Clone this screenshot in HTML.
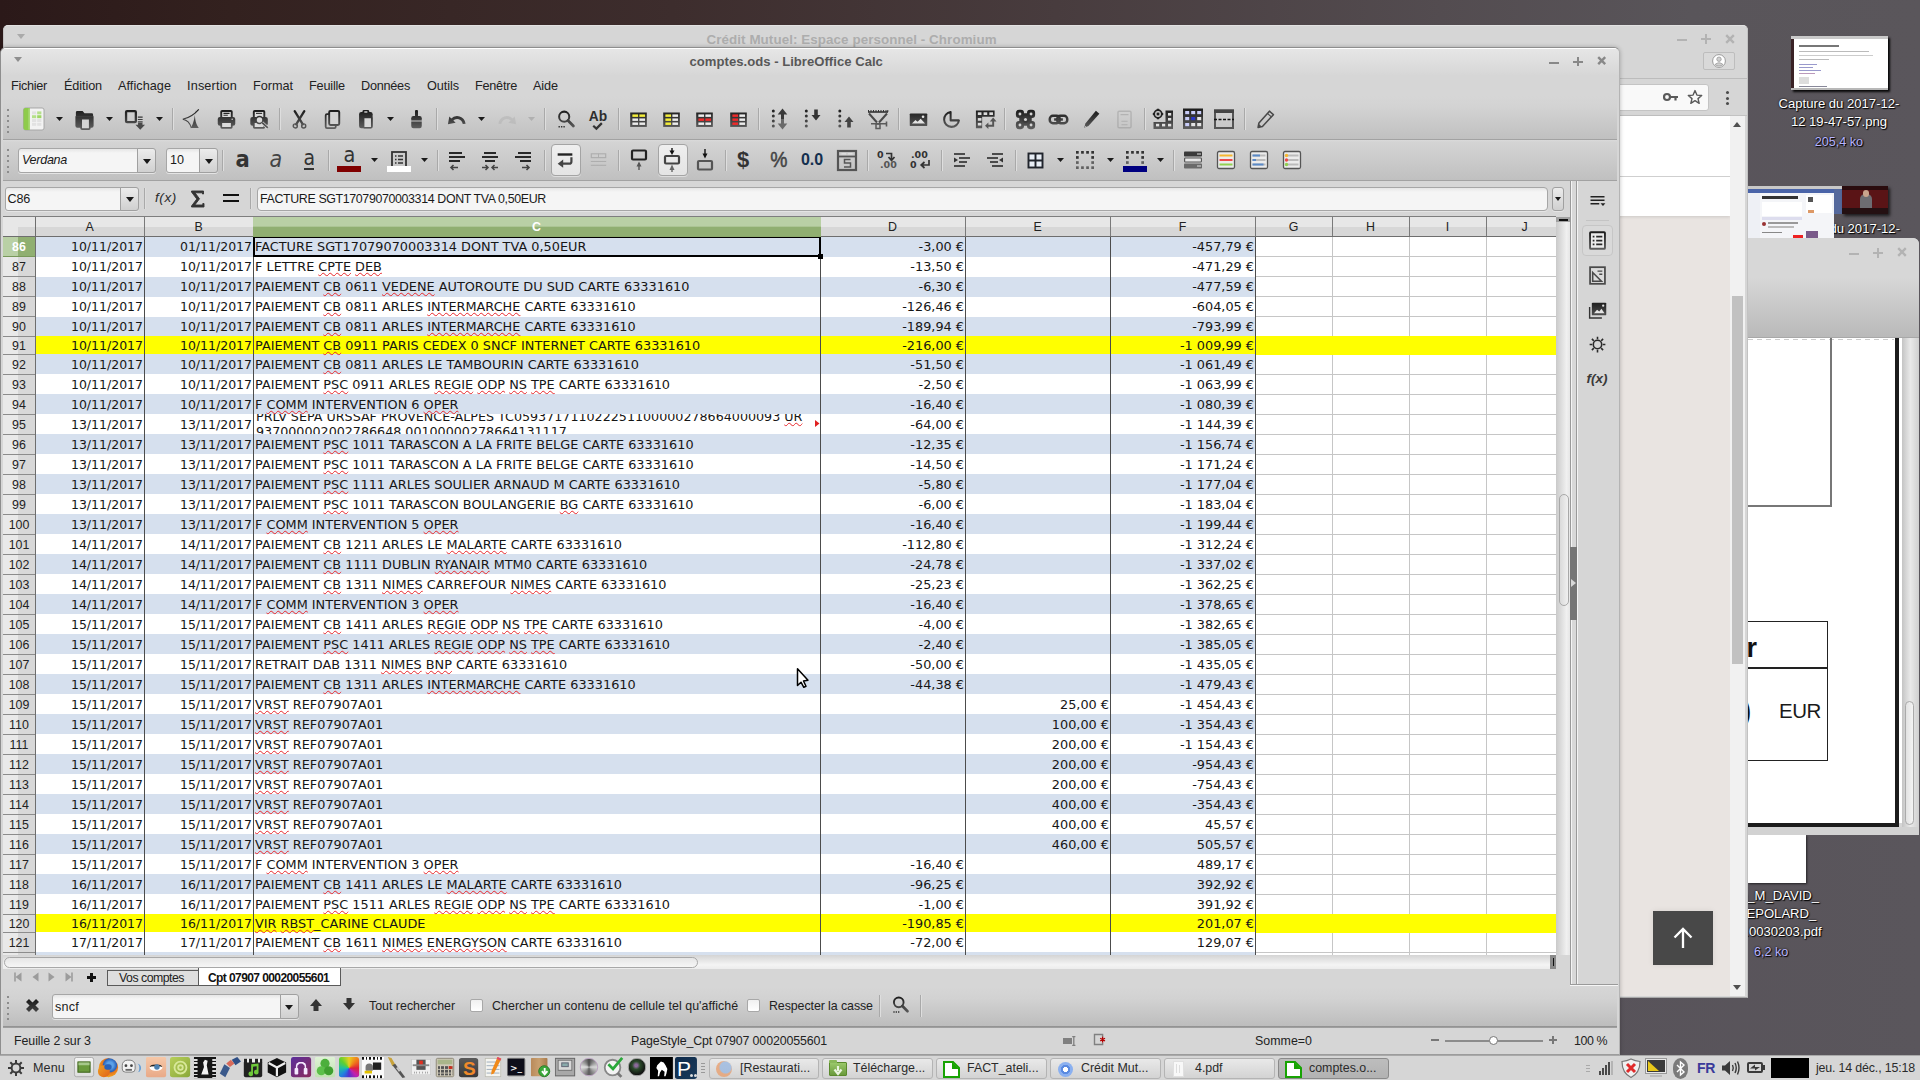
<!DOCTYPE html>
<html lang="fr"><head><meta charset="utf-8"><title>comptes.ods - LibreOffice Calc</title>
<style>
html,body{margin:0;padding:0;width:1920px;height:1080px;overflow:hidden;background:#5a565b}
body{position:relative;font-family:"Liberation Sans","DejaVu Sans",sans-serif;font-size:12px;color:#2b2b2b}
div,svg,span.t{position:absolute;box-sizing:border-box}
span.t,span.c{white-space:pre}
span.c{position:absolute;font:12.85px/16px "DejaVu Sans","Liberation Sans",sans-serif;color:#161616}
span.c.d{font-size:12.5px}
span.c u{text-decoration:underline wavy #e8262a;text-decoration-thickness:1px;text-underline-offset:.5px;text-decoration-skip-ink:none}
svg{overflow:visible}
.win{background:#d6d6d6;border-radius:5px 5px 0 0}
</style></head><body>
<div style="left:0px;top:0px;width:1920px;height:1080px;background:linear-gradient(90deg,#2b1919 0%,#33211f 12%,#3d2d2d 35%,#483c3e 55%,#534c50 75%,#59555a 88%,#5a565b 100%)"></div><div style="left:1560px;top:60px;width:360px;height:1020px;background:linear-gradient(90deg,#58535a,#5a565c)"></div><div style="left:1791px;top:36px;width:97px;height:54px;background:#fff;box-shadow:2px 2px 2px rgba(0,0,0,.9)"><div style="left:0px;top:0px;width:3px;height:54px;background:#3a2226"></div><div style="left:0px;top:52px;width:97px;height:2px;background:#b8b8b8"></div><div style="left:0px;top:0px;width:97px;height:3px;background:#c9c9c9"></div><div style="left:8px;top:9px;width:40px;height:2px;background:#777"></div><div style="left:8px;top:15px;width:70px;height:1px;background:#bbb"></div><div style="left:8px;top:19px;width:74px;height:1px;background:#ccc"></div><div style="left:8px;top:23px;width:30px;height:1px;background:#bbb"></div><div style="left:8px;top:28px;width:18px;height:1px;background:#99c"></div><div style="left:8px;top:31px;width:14px;height:1px;background:#99c"></div><div style="left:8px;top:34px;width:22px;height:1px;background:#99c"></div><div style="left:8px;top:37px;width:16px;height:1px;background:#b9b"></div><div style="left:8px;top:41px;width:10px;height:7px;background:#ddd"></div><div style="left:8px;top:50px;width:28px;height:1px;background:#889"></div></div><span class="t" style='left:1778.6px;top:95.0px;font:13.1px/18px "Liberation Sans", "DejaVu Sans", sans-serif;color:#fff;text-shadow:1px 1px 1px #000,0 0 2px #000;'>Capture du 2017-12-</span><span class="t" style='left:1790.9px;top:113.0px;font:13.1px/18px "Liberation Sans", "DejaVu Sans", sans-serif;color:#fff;text-shadow:1px 1px 1px #000,0 0 2px #000;'>12 19-47-57.png</span><span class="t" style='left:1814.8px;top:133.0px;font:12.6px/18px "Liberation Sans", "DejaVu Sans", sans-serif;color:#b9b4ff;text-shadow:1px 1px 1px #000,0 0 2px #000;'>205,4 ko</span><span class="t" style='left:1829.4px;top:219.5px;font:13.1px/18px "Liberation Sans", "DejaVu Sans", sans-serif;color:#fff;text-shadow:1px 1px 1px #000,0 0 2px #000;'>du 2017-12-</span><div style="left:1833px;top:186px;width:10px;height:28px;background:linear-gradient(#c8c8c8 0,#c8c8c8 3px,#55699c 3px)"></div><div style="left:1842px;top:186px;width:46px;height:28px;background:#5a1416;box-shadow:2px 2px 3px rgba(0,0,0,.7)"><div style="left:0px;top:0px;width:46px;height:4px;background:#2a0c0e"></div><div style="left:18px;top:8px;width:12px;height:18px;background:#6d6d72;border-radius:5px 5px 0 0"></div><div style="left:21px;top:4px;width:6px;height:7px;background:#c9a48c;border-radius:3px"></div><div style="left:0px;top:22px;width:46px;height:6px;background:#241012"></div></div><div style="left:1748px;top:186px;width:86px;height:52px;background:#f4f5f8"><div style="left:0px;top:0px;width:86px;height:3px;background:#c8c8c8"></div><div style="left:0px;top:3px;width:86px;height:4px;background:#4a64a8"></div><div style="left:0px;top:7px;width:12px;height:45px;background:#eef0f5"></div><div style="left:14px;top:10px;width:36px;height:3px;background:#333"></div><div style="left:14px;top:16px;width:40px;height:14px;background:#fff"></div><div style="left:14px;top:31px;width:40px;height:3px;background:#dde"></div><div style="left:14px;top:36px;width:4px;height:4px;background:#933;border-radius:2px"></div><div style="left:20px;top:36px;width:30px;height:2px;background:#999"></div><div style="left:20px;top:40px;width:26px;height:2px;background:#bbb"></div><div style="left:58px;top:9px;width:26px;height:18px;background:#fff"></div><div style="left:60px;top:11px;width:5px;height:5px;background:#555"></div><div style="left:60px;top:24px;width:6px;height:3px;background:#d96"></div><div style="left:45px;top:49px;width:10px;height:3px;background:#e22"></div><div style="left:58px;top:45px;width:12px;height:7px;background:#7a5a8a"></div><div style="left:14px;top:46px;width:20px;height:1px;background:#888"></div></div><div style="left:1748px;top:835px;width:58px;height:48px;background:#fff;box-shadow:1px 1px 2px rgba(0,0,0,.6)"></div><span class="t" style='left:1740.0px;top:887.0px;font:13.1px/18px "Liberation Sans", "DejaVu Sans", sans-serif;color:#fff;text-shadow:1px 1px 1px #000,0 0 2px #000;'>n_M_DAVID_</span><span class="t" style='left:1737.0px;top:905.0px;font:13.1px/18px "Liberation Sans", "DejaVu Sans", sans-serif;color:#fff;text-shadow:1px 1px 1px #000,0 0 2px #000;'>DEPOLARD_</span><span class="t" style='left:1738.0px;top:923.0px;font:13.1px/18px "Liberation Sans", "DejaVu Sans", sans-serif;color:#fff;text-shadow:1px 1px 1px #000,0 0 2px #000;'>0.0030203.pdf</span><span class="t" style='left:1754.0px;top:943.0px;font:12.6px/18px "Liberation Sans", "DejaVu Sans", sans-serif;color:#b9b4ff;text-shadow:1px 1px 1px #000,0 0 2px #000;'>6,2 ko</span>
<div class="win" style="left:3px;top:25px;width:1745px;height:972.5px;overflow:hidden"><span class="t" style='left:703.5px;top:6.5px;font:normal bold 13.4px/16px "Liberation Sans", "DejaVu Sans", sans-serif;color:#adadad;letter-spacing:0.07px;'>Crédit Mutuel: Espace personnel - Chromium</span><svg style="left:14px;top:9px;" width="8" height="5" viewBox="0 0 8 5"><path d="M0 0H8L4 5Z" fill="#aaa"/></svg><div style="left:1674px;top:14px;width:10px;height:2px;background:#b3b3b3"></div><div style="left:1698px;top:13px;width:10px;height:2px;background:#b3b3b3"></div><div style="left:1702px;top:9px;width:2px;height:10px;background:#b3b3b3"></div><svg style="left:1722px;top:8.5px;" width="10" height="10" viewBox="0 0 10 10"><path d="M1.200 1.200 L8.8 8.8 M8.8 1.200 L1.200 8.8" stroke="#b3b3b3" stroke-width="2.400" fill="none"/></svg><div style="left:1700px;top:27px;width:32px;height:18px;border:1px solid #bdbdbd;border-radius:2px;background:#d9d9d9"><svg style="left:8px;top:1px;" width="14" height="14" viewBox="0 0 14 14"><circle cx="7" cy="7" r="6.4" fill="#fff" stroke="#9a9a9a" stroke-width="1"/><circle cx="7" cy="5.2" r="2.2" fill="#d0d0d0" stroke="#9a9a9a" stroke-width=".8"/><path d="M3 10.5Q7 7 11 10.5Q7 13.6 3 10.5Z" fill="#d0d0d0" stroke="#9a9a9a" stroke-width=".8"/></svg></div><div style="left:1600px;top:53px;width:144px;height:1px;background:#bcbcbc"></div><div style="left:1560px;top:58.5px;width:146px;height:27.5px;background:#f9f9f9;border:1px solid #c4c4c4;border-radius:3px"></div><svg style="left:1660px;top:67px;" width="16" height="10" viewBox="0 0 16 10"><circle cx="4" cy="5" r="3" fill="none" stroke="#5a5a5a" stroke-width="2.2"/><path d="M7 5H15M12.5 5V8.5" stroke="#5a5a5a" stroke-width="2.2" fill="none"/></svg><svg style="left:1684px;top:64px;" width="16" height="16" viewBox="0 0 16 16"><path d="M8 1.6L9.9 6.1L14.7 6.5L11 9.6L12.2 14.3L8 11.7L3.8 14.3L5 9.6L1.3 6.5L6.1 6.1Z" fill="none" stroke="#5a5a5a" stroke-width="1.4" stroke-linejoin="round"/></svg><div style="left:1722.7px;top:66.3px;width:3px;height:3px;background:#4a4a4a;border-radius:2px"></div><div style="left:1722.7px;top:71.8px;width:3px;height:3px;background:#4a4a4a;border-radius:2px"></div><div style="left:1722.7px;top:77.3px;width:3px;height:3px;background:#4a4a4a;border-radius:2px"></div><div style="left:1600px;top:90px;width:144px;height:1px;background:#c2c2c2"></div><div style="left:1600px;top:91px;width:127px;height:880px;background:#e9e4e1"></div><div style="left:1600px;top:91px;width:127px;height:100px;background:#fff;box-shadow:0 1px 3px rgba(0,0,0,.12)"></div><div style="left:1600px;top:151px;width:127px;height:1px;background:#cfcfcf"></div><div style="left:1727px;top:91px;width:15px;height:880px;background:#f1f1f1"></div><div style="left:1729px;top:271px;width:11px;height:368px;background:#c1c1c1"></div><svg style="left:1730px;top:97px;" width="8" height="5" viewBox="0 0 8 5"><path d="M0 5H8L4 0Z" fill="#505050"/></svg><svg style="left:1730px;top:960px;" width="8" height="5" viewBox="0 0 8 5"><path d="M0 0H8L4 5Z" fill="#505050"/></svg><div style="left:1650px;top:886px;width:60px;height:54px;background:#484848;box-shadow:0 0 6px rgba(0,0,0,.08)"><svg style="left:20px;top:16px;" width="20" height="22" viewBox="0 0 20 22"><path d="M10 21V2M1.5 10.5L10 2L18.5 10.5" stroke="#fff" stroke-width="2.3" fill="none"/></svg></div><div style="left:0px;top:0px;width:1745px;height:972.5px;border:1px solid #c2c2c2;border-top-color:#e2e2e2;border-bottom-color:#a8a8a8;border-radius:5px 5px 0 0"></div></div>
<div style="left:1748px;top:238px;width:171px;height:597px;overflow:hidden;border-radius:0 6px 0 0;background:#d6d6d6"><div style="left:0px;top:0px;width:171px;height:100px;background:linear-gradient(#d7d7d7 0%,#d7d7d7 40%,#b9b9b9 100%)"></div><div style="left:101px;top:14.5px;width:10px;height:2px;background:#b3b3b3"></div><div style="left:125px;top:13.5px;width:10px;height:2px;background:#b3b3b3"></div><div style="left:129px;top:9.5px;width:2px;height:10px;background:#b3b3b3"></div><svg style="left:149px;top:9px;" width="10" height="10" viewBox="0 0 10 10"><path d="M1.200 1.200 L8.8 8.8 M8.8 1.200 L1.200 8.8" stroke="#b3b3b3" stroke-width="2.400" fill="none"/></svg><div style="left:0px;top:99px;width:171px;height:1px;background:#a8a8a8"></div><div style="left:0px;top:100px;width:148px;height:488px;background:#fff"></div><div style="left:0px;top:101px;width:146px;height:1px;background:repeating-linear-gradient(90deg,#ccc 0 5px,#fff 5px 9px)"></div><div style="left:82px;top:100px;width:2px;height:169px;background:#777"></div><div style="left:0px;top:267px;width:84px;height:2px;background:#777"></div><div style="left:0px;top:383px;width:80px;height:140px;border:1px solid #222;border-left:none"></div><div style="left:0px;top:429px;width:80px;height:2px;background:#222"></div><span class="t" style='left:-18.0px;top:395.0px;font:normal bold 27px/30px "Liberation Sans", "DejaVu Sans", sans-serif;color:#111;'>ur</span><span class="t" style='left:-6.5px;top:458.0px;font:normal bold 29px/30px "Liberation Sans", "DejaVu Sans", sans-serif;color:#111;'>)</span><span class="t" style='left:31.0px;top:461.0px;font:20.5px/24px "Liberation Sans", "DejaVu Sans", sans-serif;color:#1a1a1a;letter-spacing:-0.43px;'>EUR</span><div style="left:147px;top:100px;width:4px;height:490px;background:#1c1c1c"></div><div style="left:0px;top:585px;width:151px;height:4px;background:#1c1c1c"></div><div style="left:151px;top:100px;width:3px;height:485px;background:#fff"></div><div style="left:154px;top:100px;width:17px;height:497px;background:linear-gradient(90deg,#c4c4c4,#e9e9e9 50%,#d0d0d0)"></div><div style="left:157px;top:463px;width:9px;height:124px;border:1px solid #aaa;border-radius:5px;background:linear-gradient(90deg,#e2e2e2,#f4f4f4)"></div><div style="left:0px;top:589px;width:171px;height:8px;background:#d2d2d2"></div></div>
<svg width="0" height="0" style="left:0;top:0"><defs><linearGradient id="g" gradientUnits="userSpaceOnUse" x1="0" y1="2" x2="0" y2="22"><stop offset="0" stop-color="#1c1c1c"/><stop offset="1" stop-color="#5e5e5e"/></linearGradient></defs></svg><div style="left:0px;top:47px;width:1620px;height:1008px;border:1px solid #8e8e8e;border-right-color:#b4b4b4;border-bottom-color:#9c9c9c;border-radius:6px 6px 0 0;background:#d6d6d6;box-shadow:0 0 4px rgba(0,0,0,.25)"></div><div style="left:1px;top:48px;width:1618px;height:28px;background:linear-gradient(#fff 0,#fff 1px,#e6e6e6 1px,#d6d6d6);border-radius:5px 5px 0 0"></div><span class="t" style='left:689.5px;top:53.5px;font:normal bold 13.1px/16px "Liberation Sans", "DejaVu Sans", sans-serif;color:#585858;letter-spacing:0.02px;'>comptes.ods - LibreOffice Calc</span><svg style="left:14px;top:57px;" width="8" height="5" viewBox="0 0 8 5"><path d="M0 0H8L4 5Z" fill="#8e8e8e"/></svg><div style="left:1549.3px;top:61.5px;width:9.4px;height:2px;background:#888"></div><div style="left:1573.3px;top:60.5px;width:9.4px;height:2px;background:#888"></div><div style="left:1577px;top:56.8px;width:2px;height:9.4px;background:#888"></div><svg style="left:1597.3px;top:56.3px;" width="9.4" height="9.4" viewBox="0 0 9.4 9.4"><path d="M1.200 1.200 L8.2 8.2 M8.2 1.200 L1.200 8.2" stroke="#888" stroke-width="2.400" fill="none"/></svg><span class="t" style='left:11.0px;top:77.5px;font:12.7px/16px "Liberation Sans", "DejaVu Sans", sans-serif;color:#222;letter-spacing:-0.30px;'>Fichier</span><span class="t" style='left:64.0px;top:77.5px;font:12.7px/16px "Liberation Sans", "DejaVu Sans", sans-serif;color:#222;letter-spacing:-0.11px;'>Édition</span><span class="t" style='left:118.0px;top:77.5px;font:12.7px/16px "Liberation Sans", "DejaVu Sans", sans-serif;color:#222;letter-spacing:0.04px;'>Affichage</span><span class="t" style='left:187.0px;top:77.5px;font:12.7px/16px "Liberation Sans", "DejaVu Sans", sans-serif;color:#222;letter-spacing:0.15px;'>Insertion</span><span class="t" style='left:253.0px;top:77.5px;font:12.7px/16px "Liberation Sans", "DejaVu Sans", sans-serif;color:#222;letter-spacing:-0.03px;'>Format</span><span class="t" style='left:309.0px;top:77.5px;font:12.7px/16px "Liberation Sans", "DejaVu Sans", sans-serif;color:#222;letter-spacing:-0.20px;'>Feuille</span><span class="t" style='left:361.0px;top:77.5px;font:12.7px/16px "Liberation Sans", "DejaVu Sans", sans-serif;color:#222;letter-spacing:-0.26px;'>Données</span><span class="t" style='left:427.0px;top:77.5px;font:12.7px/16px "Liberation Sans", "DejaVu Sans", sans-serif;color:#222;letter-spacing:-0.07px;'>Outils</span><span class="t" style='left:475.0px;top:77.5px;font:12.7px/16px "Liberation Sans", "DejaVu Sans", sans-serif;color:#222;letter-spacing:-0.25px;'>Fenêtre</span><span class="t" style='left:533.0px;top:77.5px;font:12.7px/16px "Liberation Sans", "DejaVu Sans", sans-serif;color:#222;letter-spacing:-0.10px;'>Aide</span><div style="left:3px;top:96px;width:1614px;height:43px;background:linear-gradient(#d6d6d6,#d3d3d3 25%,#c0c0c0)"></div><div style="left:3px;top:139px;width:1614px;height:1px;background:#a2a2a2"></div><div style="left:7px;top:109px;width:2px;height:2px;background:#8c8c8c"></div><div style="left:7px;top:114.5px;width:2px;height:2px;background:#8c8c8c"></div><div style="left:7px;top:120px;width:2px;height:2px;background:#8c8c8c"></div><div style="left:7px;top:125.5px;width:2px;height:2px;background:#8c8c8c"></div><div style="left:7px;top:131px;width:2px;height:2px;background:#8c8c8c"></div><svg style="left:22.25px;top:107.25px;" width="23.5" height="23.5" viewBox="0 0 24 24"><rect x="1.500" y="1" width="21" height="22.500" rx="2" fill="#f3f3f3" stroke="#a6a6a6"/><path d="M3.500 1H8V23.500H3.500A2 2 0 0 1 1.500 21.500V3A2 2 0 0 1 3.500 1Z" fill="#8ecb4b"/><rect x="6.500" y="1.500" width="1.500" height="21.500" fill="#a9d977"/><rect x="10.2" y="4.5" width="4.300" height="3" fill="#e2e2e2"/><rect x="15.5" y="4.5" width="4.300" height="3" fill="#b5e08a"/><rect x="10.2" y="8.4" width="4.300" height="3" fill="#b5e08a"/><rect x="15.5" y="8.4" width="4.300" height="3" fill="#9fd765"/><rect x="10.2" y="12.3" width="4.300" height="3" fill="#e2e2e2"/><rect x="15.5" y="12.3" width="4.300" height="3" fill="#e2e2e2"/><rect x="10.2" y="16.2" width="4.300" height="3" fill="#e2e2e2"/><rect x="15.5" y="16.2" width="4.300" height="3" fill="#e2e2e2"/></svg><svg style="left:72.5px;top:107.5px;" width="23" height="23" viewBox="0 0 24 24"><path d="M3 4.500A1.500 1.500 0 0 1 4.500 3H10L12 5.500H19.500A1.500 1.500 0 0 1 21 7V9H3Z" fill="url(#g)"/><path d="M2.500 8.500H21.500V18.500A2 2 0 0 1 19.500 20.500H4.500A2 2 0 0 1 2.500 18.500Z" fill="url(#g)"/><rect x="8.500" y="11" width="9" height="11" rx="1" fill="#d4d4d4" stroke="url(#g)" stroke-width="1.800"/></svg><svg style="left:122.5px;top:107.5px;" width="23" height="23" viewBox="0 0 24 24"><rect x="3.200" y="3.200" width="10.200" height="11.600" rx="1" fill="none" stroke="url(#g)" stroke-width="2.400"/><path d="M15.500 9.500H20.500M15.500 12H20.500M15.500 14.500H20.500" stroke="url(#g)" stroke-width="1.300"/><path d="M15.700 15.500H20.300V17.500H23L18 22.800L13 17.500H15.700Z" fill="#4a4a4a"/></svg><svg style="left:180px;top:108px;" width="22" height="22" viewBox="0 0 24 24"><path d="M17 1.500C15.500 9 16.500 16 20.500 21.800L11.800 21.800C15 16 16.500 9 17 1.500Z" fill="url(#g)"/><path d="M3 12.300Q13 10 20.500 1.400M3 12.300Q10 13.500 12.500 21.800" stroke="url(#g)" stroke-width="1.300" fill="none"/></svg><svg style="left:215.5px;top:108.5px;" width="21" height="21" viewBox="0 0 24 24"><rect x="6" y="2.200" width="12" height="8" rx="1" fill="#dcdcdc" stroke="url(#g)" stroke-width="2.200"/><path d="M8.500 5H15.500M8.500 7.200H13.500" stroke="url(#g)" stroke-width="1.200"/><rect x="2" y="9" width="20" height="10" rx="2.500" fill="url(#g)"/><rect x="6" y="15" width="12" height="6.500" rx=".8" fill="#dcdcdc" stroke="url(#g)" stroke-width="2"/><circle cx="18.500" cy="11.800" r=".9" fill="#ccc"/></svg><svg style="left:248.5px;top:108.5px;" width="21" height="21" viewBox="0 0 24 24"><rect x="5.500" y="2.200" width="12" height="8" rx="1" fill="#dcdcdc" stroke="url(#g)" stroke-width="2.200"/><path d="M8 5H15" stroke="url(#g)" stroke-width="1.200"/><rect x="1.500" y="9" width="20" height="10" rx="2.500" fill="url(#g)"/><rect x="5.500" y="15" width="12" height="6.500" rx=".8" fill="#dcdcdc" stroke="url(#g)" stroke-width="2"/><circle cx="12" cy="12.500" r="4" fill="#dcdcdc" stroke="url(#g)" stroke-width="1.800"/><path d="M15 15.500L21.500 21.500" stroke="#dcdcdc" stroke-width="3.400"/><path d="M15 15.500L21.500 21.500" stroke="url(#g)" stroke-width="2"/></svg><svg style="left:288.5px;top:108.5px;" width="21" height="21" viewBox="0 0 24 24"><path d="M6.500 2.500L15.800 17.500M17.500 2.500L8.200 17.500" stroke="url(#g)" stroke-width="2.600" stroke-linecap="round"/><circle cx="7.200" cy="19.300" r="2.300" fill="none" stroke="#555" stroke-width="1.700"/><circle cx="16.800" cy="19.300" r="2.300" fill="none" stroke="#555" stroke-width="1.700"/></svg><svg style="left:321.5px;top:108.5px;" width="21" height="21" viewBox="0 0 24 24"><rect x="4.200" y="5.800" width="11.500" height="16" rx="1.500" fill="none" stroke="url(#g)" stroke-width="2"/><rect x="8.200" y="2.200" width="11.500" height="16" rx="1.500" fill="#d2d2d2" stroke="url(#g)" stroke-width="2.200"/></svg><svg style="left:355.5px;top:108.5px;" width="21" height="21" viewBox="0 0 24 24"><rect x="3.500" y="3.500" width="15.500" height="18.500" rx="2.500" fill="url(#g)"/><rect x="7.500" y="1" width="7.500" height="5" rx="1.500" fill="url(#g)"/><rect x="9.500" y="2.600" width="3.500" height="1.600" fill="#d8d8d8"/><rect x="8.700" y="9.700" width="9.300" height="11.800" rx=".8" fill="#d8d8d8" stroke="url(#g)" stroke-width="1.800"/></svg><svg style="left:405.5px;top:108.5px;" width="21" height="21" viewBox="0 0 24 24"><rect x="10.300" y="1" width="3.400" height="8" rx="1.200" fill="url(#g)"/><path d="M6 13V10.500A2.500 2.500 0 0 1 8.500 8H15.500A2.500 2.500 0 0 1 18 10.500V13Z" fill="url(#g)"/><path d="M6 14.200H18V19.500A2.500 2.500 0 0 1 15.500 22H8.500A2.500 2.500 0 0 1 6 19.500Z" fill="url(#g)"/></svg><svg style="left:445.5px;top:108.5px;" width="21" height="21" viewBox="0 0 24 24"><path d="M20.800 17C19.500 9.500 11.500 7.500 6.500 12.500" stroke="url(#g)" stroke-width="3.300" fill="none"/><path d="M2.200 17.500L3.800 8.500L11 15.800Z" fill="url(#g)"/></svg><svg style="left:554.5px;top:108.5px;" width="21" height="21" viewBox="0 0 24 24"><circle cx="10.500" cy="8.800" r="5.800" fill="none" stroke="url(#g)" stroke-width="2.300"/><path d="M14.800 13.200L21 19.500" stroke="url(#g)" stroke-width="3.200" stroke-linecap="round"/><path d="M4 20.300H5.600M6.800 20.300H8.400M9.600 20.300H11.200" stroke="#333" stroke-width="1.700"/></svg><svg style="left:586.5px;top:107.5px;" width="23" height="23" viewBox="0 0 24 24"><path d="M6.500 18.500L9.800 21.500L15.500 15.800" stroke="#333" stroke-width="2.300" fill="none"/></svg><svg style="left:627.5px;top:108.5px;" width="21" height="21" viewBox="0 0 24 24"><rect x="2.500" y="4" width="19" height="16.500" fill="url(#g)"/><rect x="5" y="6.2" width="6.500" height="2.800" fill="#f4ee3a"/><rect x="13" y="6.2" width="6.500" height="2.800" fill="#f4ee3a"/><rect x="5" y="10.8" width="6.500" height="2.800" fill="#ececec"/><rect x="13" y="10.8" width="6.500" height="2.800" fill="#ececec"/><rect x="5" y="15.4" width="6.500" height="2.800" fill="#ececec"/><rect x="13" y="15.4" width="6.500" height="2.800" fill="#ececec"/></svg><svg style="left:660.5px;top:108.5px;" width="21" height="21" viewBox="0 0 24 24"><rect x="2.500" y="4" width="19" height="16.500" fill="url(#g)"/><rect x="5" y="6.2" width="6.500" height="2.800" fill="#f4ee3a"/><rect x="13" y="6.2" width="6.500" height="2.800" fill="#ececec"/><rect x="5" y="10.8" width="6.500" height="2.800" fill="#f4ee3a"/><rect x="13" y="10.8" width="6.500" height="2.800" fill="#ececec"/><rect x="5" y="15.4" width="6.500" height="2.800" fill="#f4ee3a"/><rect x="13" y="15.4" width="6.500" height="2.800" fill="#ececec"/></svg><svg style="left:693.5px;top:108.5px;" width="21" height="21" viewBox="0 0 24 24"><rect x="2.500" y="4" width="19" height="16.500" fill="url(#g)"/><rect x="5" y="6.2" width="6.500" height="2.800" fill="#ececec"/><rect x="13" y="6.2" width="6.500" height="2.800" fill="#ececec"/><rect x="5" y="10.8" width="6.500" height="2.800" fill="#ee2a2a"/><rect x="13" y="10.8" width="6.500" height="2.800" fill="#ee2a2a"/><rect x="5" y="15.4" width="6.500" height="2.800" fill="#ececec"/><rect x="13" y="15.4" width="6.500" height="2.800" fill="#ececec"/></svg><svg style="left:727.5px;top:108.5px;" width="21" height="21" viewBox="0 0 24 24"><rect x="2.500" y="4" width="19" height="16.500" fill="url(#g)"/><rect x="5" y="6.2" width="6.500" height="2.800" fill="#ee2a2a"/><rect x="13" y="6.2" width="6.500" height="2.800" fill="#ececec"/><rect x="5" y="10.8" width="6.500" height="2.800" fill="#ee2a2a"/><rect x="13" y="10.8" width="6.500" height="2.800" fill="#ececec"/><rect x="5" y="15.4" width="6.500" height="2.800" fill="#ee2a2a"/><rect x="13" y="15.4" width="6.500" height="2.800" fill="#ececec"/></svg><svg style="left:766px;top:107px;" width="24" height="24" viewBox="0 0 24 24"><circle cx="7.3" cy="4" r="1.5" fill="url(#g)"/><circle cx="7.3" cy="9" r="1.5" fill="url(#g)"/><circle cx="7.3" cy="14" r="1.5" fill="url(#g)"/><circle cx="7.3" cy="19" r="1.5" fill="url(#g)"/><path d="M16.500 1.500L21.300 7.500H18V13H15V7.500H11.700Z" fill="#3a3a3a"/><path d="M16.500 22.500L21.300 16.500H18V12H15V16.500H11.700Z" fill="#6a6a6a"/></svg><svg style="left:799px;top:107px;" width="24" height="24" viewBox="0 0 24 24"><circle cx="7.3" cy="4" r="1.5" fill="url(#g)"/><circle cx="7.3" cy="9" r="1.5" fill="url(#g)"/><circle cx="7.3" cy="14" r="1.5" fill="url(#g)"/><circle cx="7.3" cy="19" r="1.5" fill="url(#g)"/><path d="M15.200 2.500H18.800V8H21.500L17 13.500L12.500 8H15.200Z" fill="#333"/></svg><svg style="left:833px;top:107px;" width="24" height="24" viewBox="0 0 24 24"><circle cx="6.8" cy="4" r="1.5" fill="url(#g)"/><circle cx="6.8" cy="9" r="1.5" fill="url(#g)"/><circle cx="6.8" cy="14" r="1.5" fill="url(#g)"/><circle cx="6.8" cy="19" r="1.5" fill="url(#g)"/><path d="M16 9.500L20.500 15H17.800V20.500H14.200V15H11.500Z" fill="#444"/></svg><svg style="left:866px;top:107px;" width="24" height="24" viewBox="0 0 24 24"><path d="M2 5H22" stroke="#333" stroke-width="1.600"/><path d="M2.500 3V5M5 3V5M7.500 3V5M10 3V5M12.500 3V5M15 3V5M17.500 3V5M20 3V5M21.800 3V5" stroke="#333" stroke-width="1"/><path d="M3 6.500L11 15.500M21 6.500L13 15.500" stroke="#4a4a4a" stroke-width="2"/><path d="M5 16.800H20.500V14.500V19.500" stroke="#5a5a5a" stroke-width="1.600" fill="none"/><rect x="10" y="17" width="4" height="4.500" fill="none" stroke="#5a5a5a" stroke-width="1.500"/></svg><svg style="left:907.5px;top:108.5px;" width="21" height="21" viewBox="0 0 24 24"><rect x="2" y="5" width="20" height="14.500" rx="1" fill="url(#g)"/><path d="M4.500 16.500L8.500 12.500L11 14.500L14.500 11L19.500 16.500Z" fill="#e4e4e4"/><circle cx="17.200" cy="8.800" r="1.500" fill="#e4e4e4"/></svg><svg style="left:940.5px;top:108.5px;" width="21" height="21" viewBox="0 0 24 24"><path d="M11 3.500A8.500 8.500 0 1 0 20.500 13H11Z" fill="none" stroke="url(#g)" stroke-width="2.300" stroke-linejoin="round"/></svg><svg style="left:973.5px;top:107.5px;" width="23" height="23" viewBox="0 0 24 24"><path d="M2 2.500H21.500V9H8.500V21H2Z" fill="url(#g)"/><rect x="4" y="4.500" width="3.800" height="2.800" fill="#dcdcdc"/><rect x="10" y="4.500" width="3.800" height="2.800" fill="#dcdcdc"/><rect x="16" y="4.500" width="3.800" height="2.800" fill="#dcdcdc"/><rect x="4" y="10.5" width="3.800" height="2.800" fill="#dcdcdc"/><rect x="4" y="15.5" width="3.800" height="2.800" fill="#dcdcdc"/><path d="M20 10L23.500 14H21V19.500H15V22L11.500 18.500L15 15V17.500H19V14H16.500Z" fill="#555"/></svg><svg style="left:1013.5px;top:107.5px;" width="23" height="23" viewBox="0 0 24 24"><path d="M7 7H17V17H7Z" fill="#3a3a3a" stroke="url(#g)" stroke-width="3"/><rect x="1.95" y="1.95" width="8.500" height="8.500" rx="3.200" fill="url(#g)"/><circle cx="6.2" cy="6.2" r="1.500" fill="#d4d4d4"/><rect x="1.95" y="13.55" width="8.500" height="8.500" rx="3.200" fill="url(#g)"/><circle cx="6.2" cy="17.8" r="1.500" fill="#d4d4d4"/><rect x="13.55" y="1.95" width="8.500" height="8.500" rx="3.200" fill="url(#g)"/><circle cx="17.8" cy="6.2" r="1.500" fill="#d4d4d4"/><rect x="13.55" y="13.55" width="8.500" height="8.500" rx="3.200" fill="url(#g)"/><circle cx="17.8" cy="17.8" r="1.500" fill="#d4d4d4"/><circle cx="12" cy="12" r="1.600" fill="#d4d4d4"/></svg><svg style="left:1047.5px;top:108.5px;" width="21" height="21" viewBox="0 0 24 24"><rect x="2" y="7.800" width="11.500" height="8.400" rx="3.600" fill="none" stroke="url(#g)" stroke-width="2.800"/><rect x="10.500" y="7.800" width="11.500" height="8.400" rx="3.600" fill="none" stroke="url(#g)" stroke-width="2.800"/><path d="M7 12H17" stroke="url(#g)" stroke-width="2.800"/></svg><svg style="left:1080.5px;top:108.5px;" width="21" height="21" viewBox="0 0 24 24"><path d="M17 2L21 5.500L8.500 19.500L3.500 21.500L5 16.500Z" fill="url(#g)"/><path d="M4.200 19L5.500 20.500" stroke="#ccc" stroke-width="1"/></svg><svg style="left:1151px;top:107px;" width="24" height="24" viewBox="0 0 24 24"><path d="M14.500 3.500H22V22H2.500V15H14.500Z" fill="url(#g)"/><rect x="17" y="6" width="3.200" height="2.600" fill="#e0e0e0"/><rect x="17" y="11" width="3.200" height="2.600" fill="#e0e0e0"/><rect x="17" y="16.8" width="3.200" height="2.600" fill="#e0e0e0"/><rect x="5" y="16.800" width="3.200" height="2.600" fill="#e0e0e0"/><rect x="11" y="16.800" width="3.200" height="2.600" fill="#e0e0e0"/><circle cx="7" cy="7" r="3.800" fill="#d4d4d4" stroke="#222" stroke-width="1.800"/><rect x="5.600" y="5.600" width="2.800" height="2.800" fill="#222"/><path d="M7 1.800V3M7 11V12.200M1.800 7H3M11 7H12.200" stroke="#222" stroke-width="2.200"/></svg><svg style="left:1181px;top:107px;" width="24" height="24" viewBox="0 0 24 24"><rect x="2" y="1.500" width="20" height="20.500" fill="url(#g)"/><rect x="4.2" y="4" width="4" height="3.200" fill="#c8ccf8"/><rect x="10.2" y="4" width="4" height="3.200" fill="#c8ccf8"/><rect x="16.2" y="4" width="4" height="3.200" fill="#c8ccf8"/><rect x="4.2" y="10" width="4" height="3.200" fill="#c8ccf8"/><rect x="10.2" y="10" width="4" height="3.200" fill="#2a36c8"/><rect x="16.2" y="10" width="4" height="3.200" fill="#e4e4e4"/><rect x="4.2" y="16" width="4" height="3.200" fill="#c8ccf8"/><rect x="10.2" y="16" width="4" height="3.200" fill="#e4e4e4"/><rect x="16.2" y="16" width="4" height="3.200" fill="#e4e4e4"/></svg><svg style="left:1212px;top:107px;" width="24" height="24" viewBox="0 0 24 24"><rect x="3" y="3.500" width="18" height="17.500" fill="none" stroke="#555" stroke-width="2"/><rect x="2" y="2.500" width="20" height="3.500" fill="#444"/><path d="M2 12.500H22" stroke="#111" stroke-width="1.700" stroke-dasharray="3 1.500"/></svg><svg style="left:1254.5px;top:108.5px;" width="21" height="21" viewBox="0 0 24 24"><path d="M16.500 2.500L21 6.500L8.500 20L3.500 21L4.500 16Z" fill="none" stroke="#4a4a4a" stroke-width="1.800" stroke-linejoin="round"/><path d="M3.500 21L4.300 17L7.800 20Z" fill="#4a4a4a"/><path d="M14.200 5L18.700 9" stroke="#4a4a4a" stroke-width="1.400"/></svg><svg style="left:496.5px;top:108.5px;opacity:0.09;" width="21" height="21" viewBox="0 0 24 24"><path d="M3.200 17C4.500 9.500 12.500 7.500 17.500 12.500" stroke="url(#g)" stroke-width="3.300" fill="none"/><path d="M21.800 17.500L20.200 8.500L13 15.800Z" fill="url(#g)"/></svg><span class="t" style='left:588.8px;top:109.0px;font:normal bold 13.8px/16px "Liberation Sans", "DejaVu Sans", sans-serif;color:#2e2e2e;'>Ab</span><svg style="left:1113.5px;top:108.5px;opacity:0.22;" width="21" height="21" viewBox="0 0 24 24"><rect x="4.500" y="2.500" width="15" height="19" rx="1.500" fill="none" stroke="#555" stroke-width="1.600"/><path d="M7.500 6.500H16.500M8.500 14H15.500M8.500 18H15.500" stroke="#555" stroke-width="1.300"/></svg><svg style="left:55.5px;top:116.5px;" width="7" height="4" viewBox="0 0 7 4"><path d="M0 0H7L3.500 4Z" fill="#1a1a1a"/></svg><svg style="left:105.5px;top:116.5px;" width="7" height="4" viewBox="0 0 7 4"><path d="M0 0H7L3.500 4Z" fill="#1a1a1a"/></svg><svg style="left:155.5px;top:116.5px;" width="7" height="4" viewBox="0 0 7 4"><path d="M0 0H7L3.500 4Z" fill="#1a1a1a"/></svg><svg style="left:386.5px;top:116.5px;" width="7" height="4" viewBox="0 0 7 4"><path d="M0 0H7L3.500 4Z" fill="#1a1a1a"/></svg><svg style="left:477.5px;top:116.5px;" width="7" height="4" viewBox="0 0 7 4"><path d="M0 0H7L3.500 4Z" fill="#1a1a1a"/></svg><svg style="left:527.5px;top:116.5px;" width="7" height="4" viewBox="0 0 7 4"><path d="M0 0H7L3.500 4Z" fill="#b0b0b0"/></svg><div style="left:172px;top:108px;width:1px;height:22px;background:#a9a9a9"></div><div style="left:173px;top:108px;width:1px;height:22px;background:#dedede"></div><div style="left:279px;top:108px;width:1px;height:22px;background:#a9a9a9"></div><div style="left:280px;top:108px;width:1px;height:22px;background:#dedede"></div><div style="left:436px;top:108px;width:1px;height:22px;background:#a9a9a9"></div><div style="left:437px;top:108px;width:1px;height:22px;background:#dedede"></div><div style="left:544px;top:108px;width:1px;height:22px;background:#a9a9a9"></div><div style="left:545px;top:108px;width:1px;height:22px;background:#dedede"></div><div style="left:618px;top:108px;width:1px;height:22px;background:#a9a9a9"></div><div style="left:619px;top:108px;width:1px;height:22px;background:#dedede"></div><div style="left:758px;top:108px;width:1px;height:22px;background:#a9a9a9"></div><div style="left:759px;top:108px;width:1px;height:22px;background:#dedede"></div><div style="left:898px;top:108px;width:1px;height:22px;background:#a9a9a9"></div><div style="left:899px;top:108px;width:1px;height:22px;background:#dedede"></div><div style="left:1004px;top:108px;width:1px;height:22px;background:#a9a9a9"></div><div style="left:1005px;top:108px;width:1px;height:22px;background:#dedede"></div><div style="left:1144px;top:108px;width:1px;height:22px;background:#a9a9a9"></div><div style="left:1145px;top:108px;width:1px;height:22px;background:#dedede"></div><div style="left:1244px;top:108px;width:1px;height:22px;background:#a9a9a9"></div><div style="left:1245px;top:108px;width:1px;height:22px;background:#dedede"></div><div style="left:3px;top:140px;width:1614px;height:40px;background:linear-gradient(#dadada,#d4d4d4 2px,#c0c0c0)"></div><div style="left:3px;top:180px;width:1614px;height:1px;background:#a2a2a2"></div><div style="left:7px;top:149px;width:2px;height:2px;background:#8c8c8c"></div><div style="left:7px;top:154.5px;width:2px;height:2px;background:#8c8c8c"></div><div style="left:7px;top:160px;width:2px;height:2px;background:#8c8c8c"></div><div style="left:7px;top:165.5px;width:2px;height:2px;background:#8c8c8c"></div><div style="left:7px;top:171px;width:2px;height:2px;background:#8c8c8c"></div><div style="left:18px;top:148px;width:120px;height:25px;background:linear-gradient(#e6e6e6,#f5f5f5 4px,#f5f5f5);border:1px solid #a6a6a6;border-radius:3px 0 0 3px;box-shadow:0 1px 0 #e4e4e4"></div><div style="left:137px;top:148px;width:19px;height:25px;background:linear-gradient(#ececec,#d0d0d0);border:1px solid #a0a0a0;border-radius:0 3px 3px 0;box-shadow:0 1px 0 #e4e4e4"></div><svg style="left:142.5px;top:159px;" width="8" height="5" viewBox="0 0 8 5"><path d="M0 0H8L4 5Z" fill="#1a1a1a"/></svg><span class="t" style='left:22.0px;top:152.0px;font:italic normal 12.6px/16px "Liberation Sans", "DejaVu Sans", sans-serif;color:#1a1a1a;letter-spacing:-0.31px;'>Verdana</span><div style="left:166px;top:148px;width:34px;height:25px;background:linear-gradient(#e6e6e6,#f5f5f5 4px,#f5f5f5);border:1px solid #a6a6a6;border-radius:3px 0 0 3px;box-shadow:0 1px 0 #e4e4e4"></div><div style="left:199px;top:148px;width:19px;height:25px;background:linear-gradient(#ececec,#d0d0d0);border:1px solid #a0a0a0;border-radius:0 3px 3px 0;box-shadow:0 1px 0 #e4e4e4"></div><svg style="left:204.5px;top:159px;" width="8" height="5" viewBox="0 0 8 5"><path d="M0 0H8L4 5Z" fill="#1a1a1a"/></svg><span class="t" style='left:170.0px;top:152.0px;font:12.6px/16px "Liberation Sans", "DejaVu Sans", sans-serif;color:#1a1a1a;'>10</span><div style="left:222px;top:150px;width:1px;height:21px;background:#a9a9a9"></div><div style="left:223px;top:150px;width:1px;height:21px;background:#dedede"></div><span class="t" style='left:235.2px;top:146.0px;font:normal bold 23px/26px "DejaVu Sans", "Liberation Sans", sans-serif;color:#333;transform:scaleX(.92);'>a</span><span class="t" style='left:269.1px;top:146.0px;font:italic normal 22.5px/26px "DejaVu Sans", "Liberation Sans", sans-serif;color:#444;transform:scaleX(.92);'>a</span><span class="t" style='left:303.2px;top:144.5px;font:20.5px/26px "DejaVu Sans", "Liberation Sans", sans-serif;color:#333;transform:scaleX(.92);'>a</span><div style="left:304px;top:168px;width:10px;height:1.5px;background:#333"></div><div style="left:328px;top:150px;width:1px;height:21px;background:#a9a9a9"></div><div style="left:329px;top:150px;width:1px;height:21px;background:#dedede"></div><span class="t" style='left:343.1px;top:141.5px;font:21px/26px "DejaVu Sans", "Liberation Sans", sans-serif;color:#333;transform:scaleX(.92);'>a</span><div style="left:337px;top:166px;width:24px;height:6px;background:#800000"></div><svg style="left:370.5px;top:157.5px;" width="7" height="4" viewBox="0 0 7 4"><path d="M0 0H7L3.500 4Z" fill="#1a1a1a"/></svg><svg style="left:391px;top:151px;" width="16" height="16" viewBox="0 0 16 16"><rect x="1" y="1" width="14" height="16" fill="none" stroke="#333" stroke-width="1.800"/><path d="M4 5H5.500M7 5H12M4 8.500H5.500M7 8.500H12M4 12H5.500M7 12H12" stroke="#333" stroke-width="1.600"/></svg><div style="left:387px;top:166px;width:24px;height:6px;background:#fff"></div><svg style="left:420.5px;top:157.5px;" width="7" height="4" viewBox="0 0 7 4"><path d="M0 0H7L3.500 4Z" fill="#1a1a1a"/></svg><div style="left:437px;top:150px;width:1px;height:21px;background:#a9a9a9"></div><div style="left:438px;top:150px;width:1px;height:21px;background:#dedede"></div><svg style="left:445px;top:148px;" width="24" height="24" viewBox="0 0 24 24"><path d="M4 5H17" stroke="#161616" stroke-width="1.800"/><path d="M4 9H20" stroke="#161616" stroke-width="1.800"/><path d="M4 13H15" stroke="#161616" stroke-width="1.800"/><path d="M6 19.500H13M8.500 17L6 19.500L8.500 22" stroke="#444" stroke-width="1.600" fill="none"/></svg><svg style="left:478px;top:148px;" width="24" height="24" viewBox="0 0 24 24"><path d="M6 5H18" stroke="#161616" stroke-width="1.800"/><path d="M4 9H20" stroke="#161616" stroke-width="1.800"/><path d="M7 13H17" stroke="#161616" stroke-width="1.800"/><path d="M4 19.500H10M7.500 17L10 19.500L7.500 22M20 19.500H14M16.500 17L14 19.500L16.500 22" stroke="#444" stroke-width="1.500" fill="none"/></svg><svg style="left:511px;top:148px;" width="24" height="24" viewBox="0 0 24 24"><path d="M7 5H20" stroke="#161616" stroke-width="1.800"/><path d="M4 9H20" stroke="#161616" stroke-width="1.800"/><path d="M9 13H20" stroke="#161616" stroke-width="1.800"/><path d="M11 19.500H18M15.500 17L18 19.500L15.500 22" stroke="#444" stroke-width="1.600" fill="none"/></svg><div style="left:544px;top:150px;width:1px;height:21px;background:#a9a9a9"></div><div style="left:545px;top:150px;width:1px;height:21px;background:#dedede"></div><div style="left:550.5px;top:144px;width:30px;height:32px;background:linear-gradient(#efefef,#e4e4e4);border:1px solid #a4a4a4;border-radius:4px;box-shadow:0 1px 0 #ddd"></div><svg style="left:554px;top:148.5px;" width="22" height="22" viewBox="0 0 24 24"><path d="M4 6H20" stroke="#222" stroke-width="2.600"/><path d="M19 9V13.500Q19 16 16.500 16H9" stroke="#444" stroke-width="2.400" fill="none"/><path d="M4 16L10 11.500V20.500Z" fill="#444"/></svg><svg style="left:586.5px;top:148.5px;opacity:0.3;" width="23" height="23" viewBox="0 0 24 24"><rect x="4.500" y="5" width="15" height="4" fill="none" stroke="#666" stroke-width="1.200"/><path d="M12 5V9M4 13H20M4 17H20" stroke="#666" stroke-width="1"/></svg><div style="left:618px;top:150px;width:1px;height:21px;background:#a9a9a9"></div><div style="left:619px;top:150px;width:1px;height:21px;background:#dedede"></div><svg style="left:626.5px;top:147.5px;" width="24" height="24" viewBox="0 0 24 24"><rect x="5" y="2.500" width="14" height="9" rx="1" fill="none" stroke="#222" stroke-width="2.200"/><path d="M12 22V15" stroke="#555" stroke-width="1.400"/><path d="M12 13.500L14.500 18.500H9.500Z" fill="#555"/></svg><div style="left:657.5px;top:144px;width:30px;height:32px;background:linear-gradient(#efefef,#e4e4e4);border:1px solid #a4a4a4;border-radius:4px;box-shadow:0 1px 0 #ddd"></div><svg style="left:660px;top:147.5px;" width="24" height="24" viewBox="0 0 24 24"><rect x="5" y="8" width="14" height="7.500" rx="1" fill="none" stroke="#444" stroke-width="2.200"/><path d="M12 0V4" stroke="#111" stroke-width="1.400"/><path d="M12 7L14.500 2.500H9.500Z" fill="#111"/><path d="M12 24V20" stroke="#666" stroke-width="1.400"/><path d="M12 16.500L14.500 22H9.500Z" fill="#666"/></svg><svg style="left:693px;top:147.5px;" width="24" height="24" viewBox="0 0 24 24"><rect x="5" y="13" width="14" height="8.500" rx="1" fill="none" stroke="#555" stroke-width="2.200"/><path d="M12 1V7" stroke="#111" stroke-width="1.400"/><path d="M12 10.500L14.500 5.500H9.500Z" fill="#111"/></svg><div style="left:725px;top:150px;width:1px;height:21px;background:#a9a9a9"></div><div style="left:726px;top:150px;width:1px;height:21px;background:#dedede"></div><span class="t" style='left:736.9px;top:147.0px;font:normal bold 22px/26px "Liberation Sans", "DejaVu Sans", sans-serif;color:#333;'>$</span><span class="t" style='left:768.7px;top:147.0px;font:22px/26px "Liberation Sans", "DejaVu Sans", sans-serif;color:#444;transform:scaleX(.88);-webkit-text-stroke:.5px #444;'>%</span><span class="t" style='left:800.9px;top:149.0px;font:normal bold 16px/22px "Liberation Sans", "DejaVu Sans", sans-serif;color:#14304f;'>0.0</span><svg style="left:835px;top:147.5px;" width="24" height="24" viewBox="0 0 24 24"><rect x="3" y="3" width="18" height="19" fill="none" stroke="#555" stroke-width="2.200"/><path d="M3 8.500H21" stroke="#555" stroke-width="1.800"/><path d="M6.500 5.800H11M13 5.800H17.500" stroke="#ddd" stroke-width="1.600"/><path d="M15.500 11.500H9.500V15H15.500V19H9" stroke="#555" stroke-width="1.500" fill="none"/></svg><div style="left:867px;top:150px;width:1px;height:21px;background:#a9a9a9"></div><div style="left:868px;top:150px;width:1px;height:21px;background:#dedede"></div><span class="t" style='left:877.0px;top:149.0px;font:normal bold 9.5px/11px "DejaVu Sans", "Liberation Sans", sans-serif;color:#333;'>0</span><span class="t" style='left:880.0px;top:159.0px;font:normal bold 9.5px/11px "DejaVu Sans", "Liberation Sans", sans-serif;color:#555;'>.00</span><svg style="left:886px;top:152px;" width="10" height="9" viewBox="0 0 10 9"><path d="M0 1.500H5.500V8M2.500 5L5.500 8.500L8.500 5" stroke="#333" stroke-width="1.700" fill="none"/></svg><span class="t" style='left:911.0px;top:149.0px;font:normal bold 9.5px/11px "DejaVu Sans", "Liberation Sans", sans-serif;color:#333;'>.00</span><span class="t" style='left:910.0px;top:159.0px;font:normal bold 9.5px/11px "DejaVu Sans", "Liberation Sans", sans-serif;color:#333;'>0</span><svg style="left:920px;top:160px;" width="10" height="9" viewBox="0 0 10 9"><path d="M9 0V5H1.500M4.500 2L1.200 5L4.500 8" stroke="#333" stroke-width="1.700" fill="none"/></svg><div style="left:941px;top:150px;width:1px;height:21px;background:#a9a9a9"></div><div style="left:942px;top:150px;width:1px;height:21px;background:#dedede"></div><svg style="left:950px;top:148px;" width="24" height="24" viewBox="0 0 24 24"><path d="M4 6H15M9 10H20M9 14H17M4 18H15" stroke="#222" stroke-width="1.700"/><path d="M4 9.500L8 12L4 14.500Z" fill="#333"/></svg><svg style="left:983px;top:148px;" width="24" height="24" viewBox="0 0 24 24"><path d="M9 6H20M4 10H15M7 14H15M9 18H20" stroke="#222" stroke-width="1.700"/><path d="M20 9.500L16 12L20 14.500Z" fill="#333"/></svg><div style="left:1015px;top:150px;width:1px;height:21px;background:#a9a9a9"></div><div style="left:1016px;top:150px;width:1px;height:21px;background:#dedede"></div><svg style="left:1024.5px;top:149.5px;" width="21" height="21" viewBox="0 0 24 24"><rect x="4" y="4" width="16" height="16" fill="#e8eef6" stroke="#20242c" stroke-width="2.200"/><path d="M12 4V20M4 12H20" stroke="#20242c" stroke-width="2.200"/></svg><svg style="left:1056.5px;top:157.5px;" width="7" height="4" viewBox="0 0 7 4"><path d="M0 0H7L3.500 4Z" fill="#1a1a1a"/></svg><svg style="left:1073px;top:148px;" width="24" height="24" viewBox="0 0 24 24"><rect x="3" y="3" width="2.700" height="2.700" fill="#333"/><rect x="8.1" y="3" width="2.700" height="2.700" fill="#333"/><rect x="13.2" y="3" width="2.700" height="2.700" fill="#333"/><rect x="18.3" y="3" width="2.700" height="2.700" fill="#333"/><rect x="3" y="8.1" width="2.700" height="2.700" fill="#333"/><rect x="3" y="13.2" width="2.700" height="2.700" fill="#606060"/><rect x="3" y="18.3" width="2.700" height="2.700" fill="#606060"/><rect x="18.3" y="8.1" width="2.700" height="2.700" fill="#333"/><rect x="18.3" y="13.2" width="2.700" height="2.700" fill="#606060"/><rect x="18.3" y="18.3" width="2.700" height="2.700" fill="#606060"/><rect x="8.1" y="18.3" width="2.700" height="2.700" fill="#606060"/><rect x="13.2" y="18.3" width="2.700" height="2.700" fill="#606060"/></svg><svg style="left:1106.5px;top:157.5px;" width="7" height="4" viewBox="0 0 7 4"><path d="M0 0H7L3.500 4Z" fill="#1a1a1a"/></svg><svg style="left:1123px;top:148px;" width="24" height="24" viewBox="0 0 24 24"><rect x="3" y="3" width="2.700" height="2.700" fill="#333"/><rect x="8.1" y="3" width="2.700" height="2.700" fill="#333"/><rect x="13.2" y="3" width="2.700" height="2.700" fill="#333"/><rect x="18.3" y="3" width="2.700" height="2.700" fill="#333"/><rect x="3" y="8.1" width="2.700" height="2.700" fill="#333"/><rect x="3" y="13.2" width="2.700" height="2.700" fill="#606060"/><rect x="18.3" y="8.1" width="2.700" height="2.700" fill="#333"/><rect x="18.3" y="13.2" width="2.700" height="2.700" fill="#606060"/></svg><svg style="left:1156.5px;top:157.5px;" width="7" height="4" viewBox="0 0 7 4"><path d="M0 0H7L3.500 4Z" fill="#1a1a1a"/></svg><div style="left:1123px;top:166px;width:24px;height:6px;background:#000080"></div><div style="left:1173px;top:150px;width:1px;height:21px;background:#a9a9a9"></div><div style="left:1174px;top:150px;width:1px;height:21px;background:#dedede"></div><svg style="left:1181px;top:147.5px;" width="24" height="24" viewBox="0 0 24 24"><rect x="3" y="3.500" width="18" height="5" rx=".8" fill="#3a3a3a"/><rect x="3.600" y="10" width="16.800" height="4" rx=".8" fill="#e8e8e8" stroke="#555" stroke-width="1.200"/><rect x="3" y="15.500" width="18" height="5" rx=".8" fill="#6a6a6a"/><path d="M16 6H20M16 12H20M16 18H20" stroke="#ddd" stroke-width="1.200"/></svg><svg style="left:1214px;top:147.5px;" width="24" height="24" viewBox="0 0 24 24"><rect x="3.500" y="3.500" width="17" height="17" rx="1.500" fill="#ececec" stroke="#555" stroke-width="1.300"/><path d="M5.500 7.500H18.500" stroke="#f6b730" stroke-width="2"/><path d="M5.500 12H18.500" stroke="#ee4a4a" stroke-width="2"/><path d="M5.500 16.500H18.500" stroke="#92d050" stroke-width="2"/></svg><svg style="left:1247px;top:147.5px;" width="24" height="24" viewBox="0 0 24 24"><rect x="3.500" y="3.500" width="17" height="17" rx="1.500" fill="#ececec" stroke="#555" stroke-width="1.300"/><path d="M5.500 7.500H18.500M5.500 12H18.500M5.500 16.500H18.500" stroke="#bbb" stroke-width="1.800"/><path d="M5.500 7.500H13M5.500 12H9M5.500 16.500H16.500" stroke="#5a8ac8" stroke-width="1.800"/></svg><svg style="left:1280px;top:147.5px;" width="24" height="24" viewBox="0 0 24 24"><rect x="3.500" y="3.500" width="17" height="17" rx="1.500" fill="#ececec" stroke="#555" stroke-width="1.300"/><path d="M5.500 7.500H18.500M5.500 12H18.500M5.500 16.500H18.500" stroke="#bbb" stroke-width="1.800"/><circle cx="6.500" cy="7.500" r="1.700" fill="#f6b730"/><circle cx="6.500" cy="12" r="1.700" fill="#ee4a4a"/><circle cx="6.500" cy="16.500" r="1.700" fill="#92d050"/></svg><div style="left:5px;top:186.5px;width:116px;height:24px;background:linear-gradient(#e6e6e6,#f5f5f5 4px,#f5f5f5);border:1px solid #a6a6a6;border-radius:3px 0 0 3px;box-shadow:0 1px 0 #e4e4e4"></div><div style="left:120px;top:186.5px;width:19px;height:24px;background:linear-gradient(#ececec,#d0d0d0);border:1px solid #a0a0a0;border-radius:0 3px 3px 0;box-shadow:0 1px 0 #e4e4e4"></div><svg style="left:125.5px;top:197px;" width="8" height="5" viewBox="0 0 8 5"><path d="M0 0H8L4 5Z" fill="#1a1a1a"/></svg><span class="t" style='left:7.5px;top:190.5px;font:12.6px/16px "Liberation Sans", "DejaVu Sans", sans-serif;color:#1a1a1a;letter-spacing:-0.20px;'>C86</span><div style="left:144px;top:188px;width:1px;height:21px;background:#a9a9a9"></div><div style="left:145px;top:188px;width:1px;height:21px;background:#dedede"></div><span class="t" style='left:155.0px;top:189.0px;font:italic normal 13.5px/18px "Liberation Sans", "DejaVu Sans", sans-serif;color:#2a2a2a;letter-spacing:0.62px;'>f(x)</span><svg style="left:190px;top:190px;" width="15" height="18" viewBox="0 0 15 18"><path d="M1.500 1H13.500V4H12.500V2.800H5L9.500 8.800L4.800 15H12.800V13.500H14V17H1.500V16L6.800 9L1.500 2Z" fill="#333" stroke="#333" stroke-width=".9"/></svg><div style="left:223px;top:194px;width:16px;height:2px;background:#111"></div><div style="left:223px;top:200px;width:16px;height:2px;background:#111"></div><div style="left:250px;top:188px;width:1px;height:21px;background:#a9a9a9"></div><div style="left:251px;top:188px;width:1px;height:21px;background:#dedede"></div><div style="left:256.5px;top:186.5px;width:1291px;height:24px;background:linear-gradient(#e6e6e6,#f5f5f5 4px,#f5f5f5);border:1px solid #a6a6a6;border-radius:4px;box-shadow:0 1px 0 #e4e4e4"></div><span class="t" style='left:260.0px;top:190.5px;font:12.4px/16px "Liberation Sans", "DejaVu Sans", sans-serif;color:#1a1a1a;letter-spacing:-0.36px;'>FACTURE SGT17079070003314 DONT TVA 0,50EUR</span><div style="left:1552px;top:186.5px;width:12px;height:24px;background:linear-gradient(#ececec,#d0d0d0);border:1px solid #a0a0a0;border-radius:3px;box-shadow:0 1px 0 #e4e4e4"></div><svg style="left:1555px;top:197px;" width="6" height="4" viewBox="0 0 6 4"><path d="M0 0H6L3 4Z" fill="#1a1a1a"/></svg><div style="left:36px;top:237px;width:1520px;height:718px;background:#fff"></div><div style="left:3px;top:216px;width:1553px;height:1px;background:#7e7e7e"></div><div style="left:3px;top:217px;width:1553px;height:19px;background:linear-gradient(#e7e7e7 0,#e7e7e7 9.500px,#d7d7d7 10.500px,#d7d7d7)"></div><div style="left:3px;top:217px;width:15px;height:19px;background:#e7e7e7"></div><div style="left:3px;top:236px;width:1553px;height:1px;background:#6e6e6e"></div><div style="left:253px;top:236px;width:568px;height:1px;background:#8aa96b"></div><div style="left:35px;top:217px;width:1px;height:738px;background:#6e6e6e"></div><div style="left:144px;top:217px;width:1px;height:19px;background:#7a7a7a"></div><span class="t" style='left:85.4px;top:219.0px;font:12.4px/16px "Liberation Sans", "DejaVu Sans", sans-serif;color:#222;'>A</span><div style="left:253px;top:217px;width:1px;height:19px;background:#7a7a7a"></div><span class="t" style='left:194.4px;top:219.0px;font:12.4px/16px "Liberation Sans", "DejaVu Sans", sans-serif;color:#222;'>B</span><div style="left:820px;top:217px;width:1px;height:19px;background:#7a7a7a"></div><div style="left:965px;top:217px;width:1px;height:19px;background:#7a7a7a"></div><span class="t" style='left:888.0px;top:219.0px;font:12.4px/16px "Liberation Sans", "DejaVu Sans", sans-serif;color:#222;'>D</span><div style="left:1110px;top:217px;width:1px;height:19px;background:#7a7a7a"></div><span class="t" style='left:1033.4px;top:219.0px;font:12.4px/16px "Liberation Sans", "DejaVu Sans", sans-serif;color:#222;'>E</span><div style="left:1255px;top:217px;width:1px;height:19px;background:#7a7a7a"></div><span class="t" style='left:1178.7px;top:219.0px;font:12.4px/16px "Liberation Sans", "DejaVu Sans", sans-serif;color:#222;'>F</span><div style="left:1332px;top:217px;width:1px;height:19px;background:#7a7a7a"></div><span class="t" style='left:1288.7px;top:219.0px;font:12.4px/16px "Liberation Sans", "DejaVu Sans", sans-serif;color:#222;'>G</span><div style="left:1409px;top:217px;width:1px;height:19px;background:#7a7a7a"></div><span class="t" style='left:1366.0px;top:219.0px;font:12.4px/16px "Liberation Sans", "DejaVu Sans", sans-serif;color:#222;'>H</span><div style="left:1486px;top:217px;width:1px;height:19px;background:#7a7a7a"></div><span class="t" style='left:1445.8px;top:219.0px;font:12.4px/16px "Liberation Sans", "DejaVu Sans", sans-serif;color:#222;'>I</span><span class="t" style='left:1521.4px;top:219.0px;font:12.4px/16px "Liberation Sans", "DejaVu Sans", sans-serif;color:#222;'>J</span><div style="left:253px;top:217px;width:568px;height:19px;background:linear-gradient(#b9d0a5 0,#b9d0a5 9px,#90af71 10.500px,#90af71)"></div><span class="t" style='left:532.0px;top:219.0px;font:normal bold 12.4px/16px "Liberation Sans", "DejaVu Sans", sans-serif;color:#fff;'>C</span><div style="left:3px;top:237px;width:32px;height:718px;background:linear-gradient(90deg,#e9e9e9 0,#e9e9e9 14.500px,#d8d8d8 15.500px,#d8d8d8)"></div><div style="left:3px;top:237px;width:32px;height:19px;background:linear-gradient(90deg,#b9d0a5 0,#b9d0a5 14.500px,#90af71 15.500px,#90af71)"></div><div style="left:3px;top:256px;width:32px;height:1px;background:#78985a"></div><span class="t" style='left:12.1px;top:239.0px;font:normal bold 12.4px/16px "Liberation Sans", "DejaVu Sans", sans-serif;color:#fff;'>86</span><div style="left:36px;top:237px;width:1219px;height:20px;background:#d6e0ee"></div><div style="left:1256px;top:256px;width:300px;height:1px;background:#c6c6c6"></div><div style="left:3px;top:276px;width:32px;height:1px;background:#8c8c8c"></div><span class="t" style='left:12.1px;top:258.5px;font:12.4px/16px "Liberation Sans", "DejaVu Sans", sans-serif;color:#222;'>87</span><div style="left:1256px;top:276px;width:300px;height:1px;background:#c6c6c6"></div><div style="left:3px;top:296px;width:32px;height:1px;background:#8c8c8c"></div><span class="t" style='left:12.1px;top:278.5px;font:12.4px/16px "Liberation Sans", "DejaVu Sans", sans-serif;color:#222;'>88</span><div style="left:36px;top:277px;width:1219px;height:20px;background:#d6e0ee"></div><div style="left:1256px;top:296px;width:300px;height:1px;background:#c6c6c6"></div><div style="left:3px;top:316px;width:32px;height:1px;background:#8c8c8c"></div><span class="t" style='left:12.1px;top:298.5px;font:12.4px/16px "Liberation Sans", "DejaVu Sans", sans-serif;color:#222;'>89</span><div style="left:1256px;top:316px;width:300px;height:1px;background:#c6c6c6"></div><div style="left:3px;top:336px;width:32px;height:1px;background:#8c8c8c"></div><span class="t" style='left:12.1px;top:319.0px;font:12.4px/16px "Liberation Sans", "DejaVu Sans", sans-serif;color:#222;'>90</span><div style="left:36px;top:317px;width:1219px;height:19px;background:#d6e0ee"></div><div style="left:1256px;top:336px;width:300px;height:1px;background:#c6c6c6"></div><div style="left:3px;top:354px;width:32px;height:1px;background:#8c8c8c"></div><span class="t" style='left:12.1px;top:337.5px;font:12.4px/16px "Liberation Sans", "DejaVu Sans", sans-serif;color:#222;'>91</span><div style="left:36px;top:336px;width:1520px;height:18px;background:#ffff00"></div><div style="left:3px;top:374px;width:32px;height:1px;background:#8c8c8c"></div><span class="t" style='left:12.1px;top:356.5px;font:12.4px/16px "Liberation Sans", "DejaVu Sans", sans-serif;color:#222;'>92</span><div style="left:36px;top:354px;width:1219px;height:20px;background:#d6e0ee"></div><div style="left:1256px;top:374px;width:300px;height:1px;background:#c6c6c6"></div><div style="left:3px;top:394px;width:32px;height:1px;background:#8c8c8c"></div><span class="t" style='left:12.1px;top:376.5px;font:12.4px/16px "Liberation Sans", "DejaVu Sans", sans-serif;color:#222;'>93</span><div style="left:1256px;top:394px;width:300px;height:1px;background:#c6c6c6"></div><div style="left:3px;top:414px;width:32px;height:1px;background:#8c8c8c"></div><span class="t" style='left:12.1px;top:396.5px;font:12.4px/16px "Liberation Sans", "DejaVu Sans", sans-serif;color:#222;'>94</span><div style="left:36px;top:394px;width:1219px;height:20px;background:#d6e0ee"></div><div style="left:1256px;top:414px;width:300px;height:1px;background:#c6c6c6"></div><div style="left:3px;top:434px;width:32px;height:1px;background:#8c8c8c"></div><span class="t" style='left:12.1px;top:416.5px;font:12.4px/16px "Liberation Sans", "DejaVu Sans", sans-serif;color:#222;'>95</span><div style="left:1256px;top:434px;width:300px;height:1px;background:#c6c6c6"></div><div style="left:3px;top:454px;width:32px;height:1px;background:#8c8c8c"></div><span class="t" style='left:12.1px;top:436.5px;font:12.4px/16px "Liberation Sans", "DejaVu Sans", sans-serif;color:#222;'>96</span><div style="left:36px;top:434px;width:1219px;height:20px;background:#d6e0ee"></div><div style="left:1256px;top:454px;width:300px;height:1px;background:#c6c6c6"></div><div style="left:3px;top:474px;width:32px;height:1px;background:#8c8c8c"></div><span class="t" style='left:12.1px;top:456.5px;font:12.4px/16px "Liberation Sans", "DejaVu Sans", sans-serif;color:#222;'>97</span><div style="left:1256px;top:474px;width:300px;height:1px;background:#c6c6c6"></div><div style="left:3px;top:494px;width:32px;height:1px;background:#8c8c8c"></div><span class="t" style='left:12.1px;top:476.5px;font:12.4px/16px "Liberation Sans", "DejaVu Sans", sans-serif;color:#222;'>98</span><div style="left:36px;top:474px;width:1219px;height:20px;background:#d6e0ee"></div><div style="left:1256px;top:494px;width:300px;height:1px;background:#c6c6c6"></div><div style="left:3px;top:514px;width:32px;height:1px;background:#8c8c8c"></div><span class="t" style='left:12.1px;top:496.5px;font:12.4px/16px "Liberation Sans", "DejaVu Sans", sans-serif;color:#222;'>99</span><div style="left:1256px;top:514px;width:300px;height:1px;background:#c6c6c6"></div><div style="left:3px;top:534px;width:32px;height:1px;background:#8c8c8c"></div><span class="t" style='left:8.7px;top:516.5px;font:12.4px/16px "Liberation Sans", "DejaVu Sans", sans-serif;color:#222;'>100</span><div style="left:36px;top:514px;width:1219px;height:20px;background:#d6e0ee"></div><div style="left:1256px;top:534px;width:300px;height:1px;background:#c6c6c6"></div><div style="left:3px;top:554px;width:32px;height:1px;background:#8c8c8c"></div><span class="t" style='left:8.7px;top:536.5px;font:12.4px/16px "Liberation Sans", "DejaVu Sans", sans-serif;color:#222;'>101</span><div style="left:1256px;top:554px;width:300px;height:1px;background:#c6c6c6"></div><div style="left:3px;top:574px;width:32px;height:1px;background:#8c8c8c"></div><span class="t" style='left:8.7px;top:556.5px;font:12.4px/16px "Liberation Sans", "DejaVu Sans", sans-serif;color:#222;'>102</span><div style="left:36px;top:554px;width:1219px;height:20px;background:#d6e0ee"></div><div style="left:1256px;top:574px;width:300px;height:1px;background:#c6c6c6"></div><div style="left:3px;top:594px;width:32px;height:1px;background:#8c8c8c"></div><span class="t" style='left:8.7px;top:576.5px;font:12.4px/16px "Liberation Sans", "DejaVu Sans", sans-serif;color:#222;'>103</span><div style="left:1256px;top:594px;width:300px;height:1px;background:#c6c6c6"></div><div style="left:3px;top:614px;width:32px;height:1px;background:#8c8c8c"></div><span class="t" style='left:8.7px;top:596.5px;font:12.4px/16px "Liberation Sans", "DejaVu Sans", sans-serif;color:#222;'>104</span><div style="left:36px;top:594px;width:1219px;height:20px;background:#d6e0ee"></div><div style="left:1256px;top:614px;width:300px;height:1px;background:#c6c6c6"></div><div style="left:3px;top:634px;width:32px;height:1px;background:#8c8c8c"></div><span class="t" style='left:8.7px;top:616.5px;font:12.4px/16px "Liberation Sans", "DejaVu Sans", sans-serif;color:#222;'>105</span><div style="left:1256px;top:634px;width:300px;height:1px;background:#c6c6c6"></div><div style="left:3px;top:654px;width:32px;height:1px;background:#8c8c8c"></div><span class="t" style='left:8.7px;top:636.5px;font:12.4px/16px "Liberation Sans", "DejaVu Sans", sans-serif;color:#222;'>106</span><div style="left:36px;top:634px;width:1219px;height:20px;background:#d6e0ee"></div><div style="left:1256px;top:654px;width:300px;height:1px;background:#c6c6c6"></div><div style="left:3px;top:674px;width:32px;height:1px;background:#8c8c8c"></div><span class="t" style='left:8.7px;top:656.5px;font:12.4px/16px "Liberation Sans", "DejaVu Sans", sans-serif;color:#222;'>107</span><div style="left:1256px;top:674px;width:300px;height:1px;background:#c6c6c6"></div><div style="left:3px;top:694px;width:32px;height:1px;background:#8c8c8c"></div><span class="t" style='left:8.7px;top:676.5px;font:12.4px/16px "Liberation Sans", "DejaVu Sans", sans-serif;color:#222;'>108</span><div style="left:36px;top:674px;width:1219px;height:20px;background:#d6e0ee"></div><div style="left:1256px;top:694px;width:300px;height:1px;background:#c6c6c6"></div><div style="left:3px;top:714px;width:32px;height:1px;background:#8c8c8c"></div><span class="t" style='left:8.7px;top:696.5px;font:12.4px/16px "Liberation Sans", "DejaVu Sans", sans-serif;color:#222;'>109</span><div style="left:1256px;top:714px;width:300px;height:1px;background:#c6c6c6"></div><div style="left:3px;top:734px;width:32px;height:1px;background:#8c8c8c"></div><span class="t" style='left:9.1px;top:716.5px;font:12.4px/16px "Liberation Sans", "DejaVu Sans", sans-serif;color:#222;'>110</span><div style="left:36px;top:714px;width:1219px;height:20px;background:#d6e0ee"></div><div style="left:1256px;top:734px;width:300px;height:1px;background:#c6c6c6"></div><div style="left:3px;top:754px;width:32px;height:1px;background:#8c8c8c"></div><span class="t" style='left:9.6px;top:736.5px;font:12.4px/16px "Liberation Sans", "DejaVu Sans", sans-serif;color:#222;'>111</span><div style="left:1256px;top:754px;width:300px;height:1px;background:#c6c6c6"></div><div style="left:3px;top:774px;width:32px;height:1px;background:#8c8c8c"></div><span class="t" style='left:9.1px;top:756.5px;font:12.4px/16px "Liberation Sans", "DejaVu Sans", sans-serif;color:#222;'>112</span><div style="left:36px;top:754px;width:1219px;height:20px;background:#d6e0ee"></div><div style="left:1256px;top:774px;width:300px;height:1px;background:#c6c6c6"></div><div style="left:3px;top:794px;width:32px;height:1px;background:#8c8c8c"></div><span class="t" style='left:9.1px;top:776.5px;font:12.4px/16px "Liberation Sans", "DejaVu Sans", sans-serif;color:#222;'>113</span><div style="left:1256px;top:794px;width:300px;height:1px;background:#c6c6c6"></div><div style="left:3px;top:814px;width:32px;height:1px;background:#8c8c8c"></div><span class="t" style='left:9.1px;top:796.5px;font:12.4px/16px "Liberation Sans", "DejaVu Sans", sans-serif;color:#222;'>114</span><div style="left:36px;top:794px;width:1219px;height:20px;background:#d6e0ee"></div><div style="left:1256px;top:814px;width:300px;height:1px;background:#c6c6c6"></div><div style="left:3px;top:834px;width:32px;height:1px;background:#8c8c8c"></div><span class="t" style='left:9.1px;top:816.5px;font:12.4px/16px "Liberation Sans", "DejaVu Sans", sans-serif;color:#222;'>115</span><div style="left:1256px;top:834px;width:300px;height:1px;background:#c6c6c6"></div><div style="left:3px;top:854px;width:32px;height:1px;background:#8c8c8c"></div><span class="t" style='left:9.1px;top:836.5px;font:12.4px/16px "Liberation Sans", "DejaVu Sans", sans-serif;color:#222;'>116</span><div style="left:36px;top:834px;width:1219px;height:20px;background:#d6e0ee"></div><div style="left:1256px;top:854px;width:300px;height:1px;background:#c6c6c6"></div><div style="left:3px;top:874px;width:32px;height:1px;background:#8c8c8c"></div><span class="t" style='left:9.1px;top:856.5px;font:12.4px/16px "Liberation Sans", "DejaVu Sans", sans-serif;color:#222;'>117</span><div style="left:1256px;top:874px;width:300px;height:1px;background:#c6c6c6"></div><div style="left:3px;top:894px;width:32px;height:1px;background:#8c8c8c"></div><span class="t" style='left:9.1px;top:876.5px;font:12.4px/16px "Liberation Sans", "DejaVu Sans", sans-serif;color:#222;'>118</span><div style="left:36px;top:874px;width:1219px;height:20px;background:#d6e0ee"></div><div style="left:1256px;top:894px;width:300px;height:1px;background:#c6c6c6"></div><div style="left:3px;top:914px;width:32px;height:1px;background:#8c8c8c"></div><span class="t" style='left:9.1px;top:896.5px;font:12.4px/16px "Liberation Sans", "DejaVu Sans", sans-serif;color:#222;'>119</span><div style="left:1256px;top:914px;width:300px;height:1px;background:#c6c6c6"></div><div style="left:3px;top:932px;width:32px;height:1px;background:#8c8c8c"></div><span class="t" style='left:8.7px;top:915.5px;font:12.4px/16px "Liberation Sans", "DejaVu Sans", sans-serif;color:#222;'>120</span><div style="left:36px;top:914px;width:1520px;height:18px;background:#ffff00"></div><div style="left:3px;top:952px;width:32px;height:1px;background:#8c8c8c"></div><span class="t" style='left:8.7px;top:934.5px;font:12.4px/16px "Liberation Sans", "DejaVu Sans", sans-serif;color:#222;'>121</span><div style="left:1256px;top:952px;width:300px;height:1px;background:#c6c6c6"></div><div style="left:3px;top:955px;width:32px;height:1px;background:#8c8c8c"></div><div style="left:36px;top:952px;width:1219px;height:3px;background:#d6e0ee"></div><div style="left:1332px;top:237px;width:1px;height:718px;background:#c6c6c6"></div><div style="left:1409px;top:237px;width:1px;height:718px;background:#c6c6c6"></div><div style="left:1486px;top:237px;width:1px;height:718px;background:#c6c6c6"></div><div style="left:1256px;top:336px;width:300px;height:19px;background:#ffff00"></div><div style="left:1256px;top:914px;width:300px;height:19px;background:#ffff00"></div><div style="left:144px;top:237px;width:1px;height:718px;background:#4c4c4c"></div><div style="left:253px;top:237px;width:1px;height:718px;background:#4c4c4c"></div><div style="left:820px;top:237px;width:1px;height:718px;background:#4c4c4c"></div><div style="left:965px;top:237px;width:1px;height:718px;background:#4c4c4c"></div><div style="left:1110px;top:237px;width:1px;height:718px;background:#4c4c4c"></div><div style="left:1255px;top:237px;width:1px;height:718px;background:#4c4c4c"></div><span class="c d" style="right:1777px;top:238.5px">10/11/2017</span><span class="c d" style="right:1668px;top:238.5px">01/11/2017</span><span class="c" style="left:255px;top:238.5px">FACTURE SGT17079070003314 DONT TVA 0,50EUR</span><span class="c" style="right:956px;top:238.5px">-3,00 €</span><span class="c" style="right:666px;top:238.5px">-457,79 €</span><span class="c d" style="right:1777px;top:258.5px">10/11/2017</span><span class="c d" style="right:1668px;top:258.5px">10/11/2017</span><span class="c" style="left:255px;top:258.5px">F LETTRE <u>CPTE</u> <u>DEB</u></span><span class="c" style="right:956px;top:258.5px">-13,50 €</span><span class="c" style="right:666px;top:258.5px">-471,29 €</span><span class="c d" style="right:1777px;top:278.5px">10/11/2017</span><span class="c d" style="right:1668px;top:278.5px">10/11/2017</span><span class="c" style="left:255px;top:278.5px">PAIEMENT <u>CB</u> 0611 <u>VEDENE</u> AUTOROUTE DU SUD CARTE 63331610</span><span class="c" style="right:956px;top:278.5px">-6,30 €</span><span class="c" style="right:666px;top:278.5px">-477,59 €</span><span class="c d" style="right:1777px;top:298.5px">10/11/2017</span><span class="c d" style="right:1668px;top:298.5px">10/11/2017</span><span class="c" style="left:255px;top:298.5px">PAIEMENT <u>CB</u> 0811 ARLES <u>INTERMARCHE</u> CARTE 63331610</span><span class="c" style="right:956px;top:298.5px">-126,46 €</span><span class="c" style="right:666px;top:298.5px">-604,05 €</span><span class="c d" style="right:1777px;top:318.5px">10/11/2017</span><span class="c d" style="right:1668px;top:318.5px">10/11/2017</span><span class="c" style="left:255px;top:318.5px">PAIEMENT <u>CB</u> 0811 ARLES <u>INTERMARCHE</u> CARTE 63331610</span><span class="c" style="right:956px;top:318.5px">-189,94 €</span><span class="c" style="right:666px;top:318.5px">-793,99 €</span><span class="c d" style="right:1777px;top:337.5px">10/11/2017</span><span class="c d" style="right:1668px;top:337.5px">10/11/2017</span><span class="c" style="left:255px;top:337.5px">PAIEMENT <u>CB</u> 0911 PARIS CEDEX 0 SNCF INTERNET CARTE 63331610</span><span class="c" style="right:956px;top:337.5px">-216,00 €</span><span class="c" style="right:666px;top:337.5px">-1 009,99 €</span><span class="c d" style="right:1777px;top:356.5px">10/11/2017</span><span class="c d" style="right:1668px;top:356.5px">10/11/2017</span><span class="c" style="left:255px;top:356.5px">PAIEMENT <u>CB</u> 0811 ARLES LE TAMBOURIN CARTE 63331610</span><span class="c" style="right:956px;top:356.5px">-51,50 €</span><span class="c" style="right:666px;top:356.5px">-1 061,49 €</span><span class="c d" style="right:1777px;top:376.5px">10/11/2017</span><span class="c d" style="right:1668px;top:376.5px">10/11/2017</span><span class="c" style="left:255px;top:376.5px">PAIEMENT <u>PSC</u> 0911 ARLES <u>REGIE</u> <u>ODP</u> <u>NS</u> <u>TPE</u> CARTE 63331610</span><span class="c" style="right:956px;top:376.5px">-2,50 €</span><span class="c" style="right:666px;top:376.5px">-1 063,99 €</span><span class="c d" style="right:1777px;top:396.5px">10/11/2017</span><span class="c d" style="right:1668px;top:396.5px">10/11/2017</span><span class="c" style="left:255px;top:396.5px">F <u>COMM</u> INTERVENTION 6 <u>OPER</u></span><span class="c" style="right:956px;top:396.5px">-16,40 €</span><span class="c" style="right:666px;top:396.5px">-1 080,39 €</span><span class="c d" style="right:1777px;top:416.5px">13/11/2017</span><span class="c d" style="right:1668px;top:416.5px">13/11/2017</span><div style="left:254px;top:414px;width:566px;height:20px;overflow:hidden"><span class="c" style="left:2px;top:-5.500px;line-height:15px;font-size:12.7px">PRLV SEPA URSSAF PROVENCE-ALPES TC059371711022251100000278664000093 <u>UR</u><br>937000002002786648 00100000278664131117</span></div><svg style="left:815px;top:420px;" width="5" height="7" viewBox="0 0 5 7"><path d="M0 0L4.500 3.500L0 7Z" fill="#e02020"/></svg><span class="c" style="right:956px;top:416.5px">-64,00 €</span><span class="c" style="right:666px;top:416.5px">-1 144,39 €</span><span class="c d" style="right:1777px;top:436.5px">13/11/2017</span><span class="c d" style="right:1668px;top:436.5px">13/11/2017</span><span class="c" style="left:255px;top:436.5px">PAIEMENT <u>PSC</u> 1011 TARASCON A LA FRITE BELGE CARTE 63331610</span><span class="c" style="right:956px;top:436.5px">-12,35 €</span><span class="c" style="right:666px;top:436.5px">-1 156,74 €</span><span class="c d" style="right:1777px;top:456.5px">13/11/2017</span><span class="c d" style="right:1668px;top:456.5px">13/11/2017</span><span class="c" style="left:255px;top:456.5px">PAIEMENT <u>PSC</u> 1011 TARASCON A LA FRITE BELGE CARTE 63331610</span><span class="c" style="right:956px;top:456.5px">-14,50 €</span><span class="c" style="right:666px;top:456.5px">-1 171,24 €</span><span class="c d" style="right:1777px;top:476.5px">13/11/2017</span><span class="c d" style="right:1668px;top:476.5px">13/11/2017</span><span class="c" style="left:255px;top:476.5px">PAIEMENT <u>PSC</u> 1111 ARLES SOULIER ARNAUD M CARTE 63331610</span><span class="c" style="right:956px;top:476.5px">-5,80 €</span><span class="c" style="right:666px;top:476.5px">-1 177,04 €</span><span class="c d" style="right:1777px;top:496.5px">13/11/2017</span><span class="c d" style="right:1668px;top:496.5px">13/11/2017</span><span class="c" style="left:255px;top:496.5px">PAIEMENT <u>PSC</u> 1011 TARASCON BOULANGERIE <u>BG</u> CARTE 63331610</span><span class="c" style="right:956px;top:496.5px">-6,00 €</span><span class="c" style="right:666px;top:496.5px">-1 183,04 €</span><span class="c d" style="right:1777px;top:516.5px">13/11/2017</span><span class="c d" style="right:1668px;top:516.5px">13/11/2017</span><span class="c" style="left:255px;top:516.5px">F <u>COMM</u> INTERVENTION 5 <u>OPER</u></span><span class="c" style="right:956px;top:516.5px">-16,40 €</span><span class="c" style="right:666px;top:516.5px">-1 199,44 €</span><span class="c d" style="right:1777px;top:536.5px">14/11/2017</span><span class="c d" style="right:1668px;top:536.5px">14/11/2017</span><span class="c" style="left:255px;top:536.5px">PAIEMENT <u>CB</u> 1211 ARLES LE <u>MALARTE</u> CARTE 63331610</span><span class="c" style="right:956px;top:536.5px">-112,80 €</span><span class="c" style="right:666px;top:536.5px">-1 312,24 €</span><span class="c d" style="right:1777px;top:556.5px">14/11/2017</span><span class="c d" style="right:1668px;top:556.5px">14/11/2017</span><span class="c" style="left:255px;top:556.5px">PAIEMENT <u>CB</u> 1111 DUBLIN <u>RYANAIR</u> MTM0 CARTE 63331610</span><span class="c" style="right:956px;top:556.5px">-24,78 €</span><span class="c" style="right:666px;top:556.5px">-1 337,02 €</span><span class="c d" style="right:1777px;top:576.5px">14/11/2017</span><span class="c d" style="right:1668px;top:576.5px">14/11/2017</span><span class="c" style="left:255px;top:576.5px">PAIEMENT <u>CB</u> 1311 <u>NIMES</u> CARREFOUR <u>NIMES</u> CARTE 63331610</span><span class="c" style="right:956px;top:576.5px">-25,23 €</span><span class="c" style="right:666px;top:576.5px">-1 362,25 €</span><span class="c d" style="right:1777px;top:596.5px">14/11/2017</span><span class="c d" style="right:1668px;top:596.5px">14/11/2017</span><span class="c" style="left:255px;top:596.5px">F <u>COMM</u> INTERVENTION 3 <u>OPER</u></span><span class="c" style="right:956px;top:596.5px">-16,40 €</span><span class="c" style="right:666px;top:596.5px">-1 378,65 €</span><span class="c d" style="right:1777px;top:616.5px">15/11/2017</span><span class="c d" style="right:1668px;top:616.5px">15/11/2017</span><span class="c" style="left:255px;top:616.5px">PAIEMENT <u>CB</u> 1411 ARLES <u>REGIE</u> <u>ODP</u> <u>NS</u> <u>TPE</u> CARTE 63331610</span><span class="c" style="right:956px;top:616.5px">-4,00 €</span><span class="c" style="right:666px;top:616.5px">-1 382,65 €</span><span class="c d" style="right:1777px;top:636.5px">15/11/2017</span><span class="c d" style="right:1668px;top:636.5px">15/11/2017</span><span class="c" style="left:255px;top:636.5px">PAIEMENT <u>PSC</u> 1411 ARLES <u>REGIE</u> <u>ODP</u> <u>NS</u> <u>TPE</u> CARTE 63331610</span><span class="c" style="right:956px;top:636.5px">-2,40 €</span><span class="c" style="right:666px;top:636.5px">-1 385,05 €</span><span class="c d" style="right:1777px;top:656.5px">15/11/2017</span><span class="c d" style="right:1668px;top:656.5px">15/11/2017</span><span class="c" style="left:255px;top:656.5px">RETRAIT DAB 1311 <u>NIMES</u> <u>BNP</u> CARTE 63331610</span><span class="c" style="right:956px;top:656.5px">-50,00 €</span><span class="c" style="right:666px;top:656.5px">-1 435,05 €</span><span class="c d" style="right:1777px;top:676.5px">15/11/2017</span><span class="c d" style="right:1668px;top:676.5px">15/11/2017</span><span class="c" style="left:255px;top:676.5px">PAIEMENT <u>CB</u> 1311 ARLES <u>INTERMARCHE</u> CARTE 63331610</span><span class="c" style="right:956px;top:676.5px">-44,38 €</span><span class="c" style="right:666px;top:676.5px">-1 479,43 €</span><span class="c d" style="right:1777px;top:696.5px">15/11/2017</span><span class="c d" style="right:1668px;top:696.5px">15/11/2017</span><span class="c" style="left:255px;top:696.5px"><u>VRST</u> REF07907A01</span><span class="c" style="right:811px;top:696.5px">25,00 €</span><span class="c" style="right:666px;top:696.5px">-1 454,43 €</span><span class="c d" style="right:1777px;top:716.5px">15/11/2017</span><span class="c d" style="right:1668px;top:716.5px">15/11/2017</span><span class="c" style="left:255px;top:716.5px"><u>VRST</u> REF07907A01</span><span class="c" style="right:811px;top:716.5px">100,00 €</span><span class="c" style="right:666px;top:716.5px">-1 354,43 €</span><span class="c d" style="right:1777px;top:736.5px">15/11/2017</span><span class="c d" style="right:1668px;top:736.5px">15/11/2017</span><span class="c" style="left:255px;top:736.5px"><u>VRST</u> REF07907A01</span><span class="c" style="right:811px;top:736.5px">200,00 €</span><span class="c" style="right:666px;top:736.5px">-1 154,43 €</span><span class="c d" style="right:1777px;top:756.5px">15/11/2017</span><span class="c d" style="right:1668px;top:756.5px">15/11/2017</span><span class="c" style="left:255px;top:756.5px"><u>VRST</u> REF07907A01</span><span class="c" style="right:811px;top:756.5px">200,00 €</span><span class="c" style="right:666px;top:756.5px">-954,43 €</span><span class="c d" style="right:1777px;top:776.5px">15/11/2017</span><span class="c d" style="right:1668px;top:776.5px">15/11/2017</span><span class="c" style="left:255px;top:776.5px"><u>VRST</u> REF07907A01</span><span class="c" style="right:811px;top:776.5px">200,00 €</span><span class="c" style="right:666px;top:776.5px">-754,43 €</span><span class="c d" style="right:1777px;top:796.5px">15/11/2017</span><span class="c d" style="right:1668px;top:796.5px">15/11/2017</span><span class="c" style="left:255px;top:796.5px"><u>VRST</u> REF07907A01</span><span class="c" style="right:811px;top:796.5px">400,00 €</span><span class="c" style="right:666px;top:796.5px">-354,43 €</span><span class="c d" style="right:1777px;top:816.5px">15/11/2017</span><span class="c d" style="right:1668px;top:816.5px">15/11/2017</span><span class="c" style="left:255px;top:816.5px"><u>VRST</u> REF07907A01</span><span class="c" style="right:811px;top:816.5px">400,00 €</span><span class="c" style="right:666px;top:816.5px">45,57 €</span><span class="c d" style="right:1777px;top:836.5px">15/11/2017</span><span class="c d" style="right:1668px;top:836.5px">15/11/2017</span><span class="c" style="left:255px;top:836.5px"><u>VRST</u> REF07907A01</span><span class="c" style="right:811px;top:836.5px">460,00 €</span><span class="c" style="right:666px;top:836.5px">505,57 €</span><span class="c d" style="right:1777px;top:856.5px">15/11/2017</span><span class="c d" style="right:1668px;top:856.5px">15/11/2017</span><span class="c" style="left:255px;top:856.5px">F <u>COMM</u> INTERVENTION 3 <u>OPER</u></span><span class="c" style="right:956px;top:856.5px">-16,40 €</span><span class="c" style="right:666px;top:856.5px">489,17 €</span><span class="c d" style="right:1777px;top:876.5px">16/11/2017</span><span class="c d" style="right:1668px;top:876.5px">16/11/2017</span><span class="c" style="left:255px;top:876.5px">PAIEMENT <u>CB</u> 1411 ARLES LE <u>MALARTE</u> CARTE 63331610</span><span class="c" style="right:956px;top:876.5px">-96,25 €</span><span class="c" style="right:666px;top:876.5px">392,92 €</span><span class="c d" style="right:1777px;top:896.5px">16/11/2017</span><span class="c d" style="right:1668px;top:896.5px">16/11/2017</span><span class="c" style="left:255px;top:896.5px">PAIEMENT <u>PSC</u> 1511 ARLES <u>REGIE</u> <u>ODP</u> <u>NS</u> <u>TPE</u> CARTE 63331610</span><span class="c" style="right:956px;top:896.5px">-1,00 €</span><span class="c" style="right:666px;top:896.5px">391,92 €</span><span class="c d" style="right:1777px;top:915.5px">16/11/2017</span><span class="c d" style="right:1668px;top:915.5px">16/11/2017</span><span class="c" style="left:255px;top:915.5px"><u>VIR</u> <u>RBST</u>_CARINE CLAUDE</span><span class="c" style="right:956px;top:915.5px">-190,85 €</span><span class="c" style="right:666px;top:915.5px">201,07 €</span><span class="c d" style="right:1777px;top:934.5px">17/11/2017</span><span class="c d" style="right:1668px;top:934.5px">17/11/2017</span><span class="c" style="left:255px;top:934.5px">PAIEMENT <u>CB</u> 1611 <u>NIMES</u> <u>ENERGYSON</u> CARTE 63331610</span><span class="c" style="right:956px;top:934.5px">-72,00 €</span><span class="c" style="right:666px;top:934.5px">129,07 €</span><div style="left:253px;top:237px;width:568px;height:20px;border:2px solid #000;border-top-width:1px"></div><div style="left:818px;top:254px;width:5px;height:5px;background:#000"></div><svg style="left:796px;top:667px;" width="14" height="22" viewBox="0 0 14 22"><path d="M1.500 1.800V18.500L5 15.200L7.800 20.300L10 19.300L7.500 14L12 13.200Z" fill="#fff" stroke="#000" stroke-width="1.500" stroke-linejoin="round"/></svg><div style="left:1570px;top:181px;width:1px;height:804px;background:#9a9a9a"></div><div style="left:1571px;top:181px;width:1px;height:804px;background:#f4f4f4"></div><div style="left:1572px;top:181px;width:4px;height:804px;background:#d8d8d8"></div><div style="left:1576px;top:181px;width:1px;height:804px;background:#9a9a9a"></div><div style="left:1577px;top:181px;width:1px;height:804px;background:#f4f4f4"></div><div style="left:1570px;top:547px;width:7px;height:73px;background:#767676"></div><svg style="left:1571px;top:579px;" width="5" height="8" viewBox="0 0 5 8"><path d="M0 0L5 4L0 8Z" fill="#d8d8d8"/></svg><div style="left:1570px;top:984px;width:48px;height:1px;background:#9a9a9a"></div><div style="left:1570px;top:985px;width:48px;height:1px;background:#f6f6f6"></div><div style="left:1586px;top:220px;width:23px;height:1px;background:#c4c4c4"></div><div style="left:1582px;top:225px;width:31px;height:31px;border:1px solid #c6c6c6;border-radius:4px;background:#d9d9d9"></div><svg style="left:1586.5px;top:190.5px;" width="21" height="21" viewBox="0 0 24 24"><path d="M4 6.500H20M4 10.500H20M4 14.500H14" stroke="#222" stroke-width="1.800"/><path d="M15.500 14H21L18.250 17Z" fill="#222"/></svg><svg style="left:1586.5px;top:229.5px;" width="21" height="21" viewBox="0 0 24 24"><rect x="3.500" y="2.500" width="17" height="19" rx="1" fill="#ececec" stroke="url(#g)" stroke-width="2.200"/><path d="M6.500 7.500H8.500M10.500 7.500H17.500M6.500 12H8.500M10.500 12H17.500M6.500 16.500H8.500M10.500 16.500H17.500" stroke="#2a2a2a" stroke-width="2"/></svg><svg style="left:1586.5px;top:264.5px;" width="21" height="21" viewBox="0 0 24 24"><rect x="3.500" y="2.500" width="17" height="19" fill="#dcdcdc" stroke="#4a4a4a" stroke-width="2"/><path d="M12 7H17.500M14 10.500H17.500" stroke="#4a4a4a" stroke-width="1.600"/><path d="M6.500 8.500L16.500 18.500H6.500Z" fill="none" stroke="#4a4a4a" stroke-width="1.800"/></svg><svg style="left:1586.5px;top:299.5px;" width="21" height="21" viewBox="0 0 24 24"><path d="M3 8V20.500H17" stroke="#333" stroke-width="1.600" fill="none"/><rect x="5.500" y="3" width="16.500" height="14.500" rx="1" fill="url(#g)"/><path d="M8 15L11.500 11L14 13L16.500 10L20 15Z" fill="#e4e4e4"/><circle cx="18.500" cy="6.500" r="1.300" fill="#e4e4e4"/></svg><svg style="left:1586.5px;top:333.5px;" width="21" height="21" viewBox="0 0 24 24"><g stroke="#2a2a2a" stroke-width="1.800" fill="none"><circle cx="12" cy="12" r="4.800"/><path d="M12 3V6M12 18V21M3 12H6M18 12H21M5.600 5.600L7.800 7.800M16.200 16.200L18.400 18.400M5.600 18.400L7.800 16.200M16.200 7.800L18.400 5.600"/></g></svg><span class="t" style='left:1586.5px;top:370.0px;font:italic bold 13.5px/18px "Liberation Sans", "DejaVu Sans", sans-serif;color:#3a3a3a;'>f(x)</span><div style="left:3px;top:955px;width:1553px;height:14px;background:linear-gradient(#d4d4d4,#f4f4f4 70%,#ececec)"></div><div style="left:4px;top:956.5px;width:694px;height:11px;border:1px solid #a8a8a8;border-radius:6px;background:linear-gradient(#e6e6e6,#f6f6f6)"></div><div style="left:1550px;top:955px;width:6px;height:14px;background:#8a8a8a"></div><div style="left:1552.5px;top:958px;width:1.5px;height:8px;background:#111"></div><div style="left:1556px;top:217px;width:14px;height:738px;background:linear-gradient(90deg,#cacaca,#f0f0f0 75%,#e6e6e6)"></div><div style="left:1556px;top:217px;width:14px;height:5px;background:#a0a0a0"></div><div style="left:1559px;top:219px;width:9px;height:1.5px;background:#111"></div><div style="left:1558.5px;top:494px;width:10px;height:112px;border:1px solid #a8a8a8;border-radius:5px;background:linear-gradient(90deg,#dadada,#f0f0f0)"></div><div style="left:3px;top:969px;width:1567px;height:18px;background:#d6d6d6"></div><svg style="left:14px;top:972px;" width="9" height="10" viewBox="0 0 9 10"><path d="M7.500 0.500V9.500L1.500 5Z" fill="#9c9c9c"/><path d="M1 0.500V9.500" stroke="#9c9c9c" stroke-width="1.600"/></svg><svg style="left:31px;top:972px;" width="9" height="10" viewBox="0 0 9 10"><path d="M7.500 0.500V9.500L1.500 5Z" fill="#9c9c9c"/></svg><svg style="left:47px;top:972px;" width="9" height="10" viewBox="0 0 9 10"><path d="M1.500 0.500V9.500L7.500 5Z" fill="#9c9c9c"/></svg><svg style="left:64px;top:972px;" width="9" height="10" viewBox="0 0 9 10"><path d="M1.500 0.500V9.500L7.500 5Z" fill="#9c9c9c"/><path d="M8 0.500V9.500" stroke="#9c9c9c" stroke-width="1.600"/></svg><div style="left:87px;top:976px;width:9px;height:2.6px;background:#111"></div><div style="left:90.2px;top:972.8px;width:2.6px;height:9px;background:#111"></div><div style="left:106.5px;top:969.5px;width:92px;height:16.5px;border:1px solid #5a5a5a;background:#dedede"></div><div style="left:197.5px;top:968px;width:143px;height:18px;border:1px solid #5a5a5a;border-top:none;background:#fff"></div><span class="t" style='left:119.0px;top:969.5px;font:12.3px/16px "Liberation Sans", "DejaVu Sans", sans-serif;color:#222;letter-spacing:-0.49px;'>Vos comptes</span><span class="t" style='left:208.0px;top:969.5px;font:normal bold 12px/16px "Liberation Sans", "DejaVu Sans", sans-serif;color:#111;letter-spacing:-0.59px;'>Cpt 07907 00020055601</span><div style="left:3px;top:987px;width:1614px;height:39px;background:linear-gradient(#d6d6d6,#d2d2d2 30%,#bdbdbd)"></div><div style="left:3px;top:1026px;width:1614px;height:2px;background:linear-gradient(#8e8e8e,#a4a4a4)"></div><div style="left:7px;top:996px;width:2px;height:2px;background:#8c8c8c"></div><div style="left:7px;top:1001.5px;width:2px;height:2px;background:#8c8c8c"></div><div style="left:7px;top:1007px;width:2px;height:2px;background:#8c8c8c"></div><div style="left:7px;top:1012.5px;width:2px;height:2px;background:#8c8c8c"></div><div style="left:7px;top:1018px;width:2px;height:2px;background:#8c8c8c"></div><svg style="left:25px;top:998px;" width="15" height="15" viewBox="0 0 15 15"><path d="M2.500 2.500L12.500 12.500M12.500 2.500L2.500 12.500" stroke="url(#g)" stroke-width="4.200"/></svg><div style="left:51.5px;top:994px;width:229px;height:25px;background:linear-gradient(#e6e6e6,#f5f5f5 4px,#f5f5f5);border:1px solid #a6a6a6;border-radius:3px 0 0 3px;box-shadow:0 1px 0 #e4e4e4"></div><div style="left:279.5px;top:994px;width:19px;height:25px;background:linear-gradient(#ececec,#d0d0d0);border:1px solid #a0a0a0;border-radius:0 3px 3px 0;box-shadow:0 1px 0 #e4e4e4"></div><svg style="left:285px;top:1005px;" width="8" height="5" viewBox="0 0 8 5"><path d="M0 0H8L4 5Z" fill="#1a1a1a"/></svg><span class="t" style='left:55.0px;top:998.5px;font:12.6px/16px "Liberation Sans", "DejaVu Sans", sans-serif;color:#1a1a1a;letter-spacing:0.22px;'>sncf</span><svg style="left:309px;top:998px;" width="14" height="14" viewBox="0 0 14 14"><path d="M7 1L13 8H9.500V13H4.500V8H1Z" fill="#333"/></svg><svg style="left:342px;top:997px;" width="14" height="14" viewBox="0 0 14 14"><path d="M7 13L13 6H9.500V1H4.500V6H1Z" fill="#333"/></svg><span class="t" style='left:369.0px;top:997.5px;font:12.4px/16px "Liberation Sans", "DejaVu Sans", sans-serif;color:#222;'>Tout rechercher</span><div style="left:469.5px;top:999px;width:13px;height:13px;border:1px solid #a8a8a8;border-radius:2px;background:linear-gradient(#f0f0f0,#fff)"></div><span class="t" style='left:492.0px;top:997.5px;font:12.4px/16px "Liberation Sans", "DejaVu Sans", sans-serif;color:#222;letter-spacing:0.05px;'>Chercher un contenu de cellule tel qu&#x27;affiché</span><div style="left:746.5px;top:999px;width:13px;height:13px;border:1px solid #a8a8a8;border-radius:2px;background:linear-gradient(#f0f0f0,#fff)"></div><span class="t" style='left:769.0px;top:997.5px;font:12.4px/16px "Liberation Sans", "DejaVu Sans", sans-serif;color:#222;letter-spacing:-0.08px;'>Respecter la casse</span><div style="left:879px;top:995px;width:1px;height:22px;background:#a9a9a9"></div><div style="left:880px;top:995px;width:1px;height:22px;background:#dedede"></div><svg style="left:890px;top:995px;" width="20" height="20" viewBox="0 0 24 24"><circle cx="10.500" cy="8.800" r="5.800" fill="none" stroke="url(#g)" stroke-width="2.300"/><path d="M14.800 13.200L21 19.500" stroke="url(#g)" stroke-width="3.200" stroke-linecap="round"/><path d="M4 20.300H5.600M6.800 20.300H8.400M9.600 20.300H11.200" stroke="#333" stroke-width="1.700"/></svg><div style="left:920px;top:995px;width:1px;height:22px;background:#a9a9a9"></div><div style="left:921px;top:995px;width:1px;height:22px;background:#dedede"></div><span class="t" style='left:14.0px;top:1032.5px;font:12.4px/16px "Liberation Sans", "DejaVu Sans", sans-serif;color:#222;letter-spacing:-0.06px;'>Feuille 2 sur 3</span><span class="t" style='left:631.0px;top:1032.5px;font:12.4px/16px "Liberation Sans", "DejaVu Sans", sans-serif;color:#222;letter-spacing:-0.12px;'>PageStyle_Cpt 07907 00020055601</span><div style="left:1063px;top:1038px;width:9px;height:6px;background:#808080"></div><svg style="left:1071px;top:1036px;" width="6" height="10" viewBox="0 0 6 10"><path d="M2.800 0.600V9.400M1.200 0.600H4.400M1.200 9.400H4.400" stroke="#808080" stroke-width="1.300" fill="none"/></svg><svg style="left:1093px;top:1033px;" width="14" height="13" viewBox="0 0 14 13"><path d="M9.600 4V1.500H1.500V11.500H9.600V9.500" stroke="#808080" stroke-width="1.400" fill="none"/><path d="M9.600 3.800V9.400M7.200 5.200L12 8M12 5.200L7.200 8" stroke="#b40000" stroke-width="1.300"/></svg><span class="t" style='left:1255.0px;top:1032.5px;font:12.4px/16px "Liberation Sans", "DejaVu Sans", sans-serif;color:#222;letter-spacing:0.02px;'>Somme=0</span><div style="left:1431px;top:1039px;width:8px;height:2px;background:#777"></div><div style="left:1445px;top:1039.5px;width:98px;height:2px;background:#8c8c8c"></div><div style="left:1489px;top:1036px;width:8.5px;height:8.5px;border:1px solid #777;border-radius:5px;background:#fff"></div><div style="left:1549px;top:1039px;width:8px;height:2px;background:#777"></div><div style="left:1552px;top:1036px;width:2px;height:8px;background:#777"></div><span class="t" style='left:1574.0px;top:1032.5px;font:12.4px/16px "Liberation Sans", "DejaVu Sans", sans-serif;color:#222;letter-spacing:-0.43px;'>100 %</span>
<div style="left:0px;top:1055px;width:1920px;height:25px;background:#d6d6d6;border-top:1px solid #a9a9a9"></div><svg style="left:8px;top:1060px;" width="16" height="16" viewBox="0 0 16 16"><g stroke="#3a3a3a" stroke-width="2" fill="none"><circle cx="8" cy="8" r="4.4"/><path d="M8 0V3M8 13V16M0 8H3M13 8H16M2.3 2.3L4.5 4.5M11.5 11.5L13.7 13.7M2.3 13.7L4.5 11.5M11.5 4.5L13.7 2.3"/></g></svg><span class="t" style='left:33.0px;top:1059.0px;font:12.6px/18px "Liberation Sans", "DejaVu Sans", sans-serif;color:#2b2b2b;letter-spacing:0.12px;'>Menu</span><div style="left:73px;top:1056px;width:26px;height:26px;overflow:hidden;transform:scale(.92);transform-origin:11px 12px;"><div style="left:0px;top:0px;width:22px;height:22px;border:1px solid #aaa;border-radius:3px;background:linear-gradient(#f4f4f4,#ddd)"></div><div style="left:4px;top:5px;width:14px;height:12px;background:#6a9a3c;border:1px solid #3f5f22"></div><div style="left:5px;top:6px;width:12px;height:3px;background:#a6c88a"></div></div><div style="left:97px;top:1056px;width:26px;height:26px;overflow:hidden;transform:scale(.92);transform-origin:11px 12px;"><div style="left:1px;top:1px;width:21px;height:21px;border-radius:11px;background:radial-gradient(circle at 58% 38%,#5aa0e8 0 20%,#2a62b8 40%,#e8761a 47%,#f0a020 70%,#d85a10 100%)"></div><div style="left:0px;top:9px;width:13px;height:13px;border-radius:7px 3px 7px 7px;background:linear-gradient(135deg,#f0a020,#e0601a)"></div><div style="left:7px;top:8px;width:8px;height:6px;border-radius:4px;background:#2a62b8"></div></div><div style="left:120px;top:1056px;width:26px;height:26px;overflow:hidden;transform:scale(.92);transform-origin:11px 12px;"><div style="left:1px;top:3px;width:15px;height:14px;border-radius:6px 6px 4px 4px;background:#f2f2f2;border:1px solid #777"></div><div style="left:4px;top:8px;width:3px;height:3px;background:#444;border-radius:2px"></div><div style="left:10px;top:8px;width:3px;height:3px;background:#444;border-radius:2px"></div><div style="left:5px;top:13px;width:7px;height:2px;background:#666"></div><div style="left:17px;top:7px;width:5px;height:10px;border-right:2px solid #6a9fd4;border-radius:0 6px 6px 0"></div></div><div style="left:145px;top:1056px;width:26px;height:26px;overflow:hidden;transform:scale(.92);transform-origin:11px 12px;"><div style="left:0px;top:0px;width:22px;height:22px;background:linear-gradient(#f6c8a8,#e9a987);border-radius:2px"></div><div style="left:4px;top:8px;width:14px;height:7px;background:#fff;border-radius:7px/4px;border-top:2px solid #222"></div><div style="left:9px;top:8px;width:6px;height:6px;background:#4a7fb0;border-radius:3px"></div></div><div style="left:169px;top:1056px;width:26px;height:26px;overflow:hidden;transform:scale(.92);transform-origin:11px 12px;"><div style="left:0px;top:0px;width:22px;height:22px;background:linear-gradient(135deg,#b7cf5a,#8aa83a);border-radius:3px"></div><div style="left:4px;top:4px;width:15px;height:15px;border:2px solid #d8e89a;border-radius:8px"></div><div style="left:8px;top:8px;width:7px;height:7px;border:2px solid #d8e89a;border-radius:4px"></div></div><div style="left:193px;top:1056px;width:26px;height:26px;overflow:hidden;transform:scale(.92);transform-origin:11px 12px;"><div style="left:0px;top:0px;width:24px;height:23px;background:#161616"></div><div style="left:0px;top:0px;width:4px;height:23px;background:repeating-linear-gradient(#161616 0 2px,#ddd 2px 4px)"></div><div style="left:20px;top:0px;width:4px;height:23px;background:repeating-linear-gradient(#161616 0 2px,#ddd 2px 4px)"></div><svg style="left:7px;top:3px;" width="10" height="17" viewBox="0 0 10 17"><path d="M5 0L8 1L7 6L9 16H1L4 8L3 3Z" fill="#f2f2f2"/></svg></div><div style="left:218px;top:1056px;width:26px;height:26px;overflow:hidden;transform:scale(.92);transform-origin:11px 12px;"><svg style="left:0px;top:0px;" width="24" height="22" viewBox="0 0 24 22"><path d="M1 18L6 8L12 12L7 22Z" fill="#3b5a8c"/><path d="M8 7L13 3L17 7L12 11Z" fill="#d86a5a"/><path d="M14 3L20 0L24 5L18 9Z" fill="#2f4f86"/></svg></div><div style="left:242px;top:1056px;width:26px;height:26px;overflow:hidden;transform:scale(.92);transform-origin:11px 12px;"><div style="left:1px;top:4px;width:20px;height:18px;background:#222;border-radius:2px"></div><div style="left:1px;top:2px;width:20px;height:4px;background:repeating-linear-gradient(90deg,#222 0 3px,#eee 3px 6px)"></div><svg style="left:4px;top:7px;" width="14" height="14" viewBox="0 0 14 14"><path d="M5 1L13 0V9A2.5 2.5 0 1 1 11 7V3L7 3.6V11A2.5 2.5 0 1 1 5 9Z" fill="#6ec83a"/></svg></div><div style="left:265px;top:1056px;width:26px;height:26px;overflow:hidden;transform:scale(.92);transform-origin:11px 12px;"><svg style="left:0px;top:0px;" width="24" height="22" viewBox="0 0 24 22"><path d="M12 1L22 6V17L12 22L2 17V6Z" fill="#111"/><path d="M12 11.5V21M12 11.5L3 6.5M12 11.5L21 6.5" stroke="#eee" stroke-width="2.4"/><path d="M12 3L19.5 6.8L12 10.6L4.500 6.8Z" fill="#eee" opacity=".0"/></svg></div><div style="left:290px;top:1056px;width:26px;height:26px;overflow:hidden;transform:scale(.92);transform-origin:11px 12px;"><div style="left:0px;top:0px;width:22px;height:22px;background:linear-gradient(135deg,#5a2f9c,#8a2a5c);border-radius:3px"></div><div style="left:5px;top:5px;width:12px;height:13px;border:2.5px solid #f4e9ff;border-bottom:none;border-radius:7px 7px 0 0"></div><div style="left:4px;top:12px;width:4px;height:7px;background:#f4e9ff;border-radius:1px"></div><div style="left:14px;top:12px;width:4px;height:7px;background:#f4e9ff;border-radius:1px"></div></div><div style="left:314px;top:1056px;width:26px;height:26px;overflow:hidden;transform:scale(.92);transform-origin:11px 12px;"><div style="left:0px;top:0px;width:22px;height:22px;background:linear-gradient(#dff2d6,#bfe3b0);border-radius:2px"></div><div style="left:6px;top:2px;width:10px;height:10px;background:#4caf3c;border-radius:5px"></div><div style="left:2px;top:10px;width:10px;height:10px;background:#5cbf4a;border-radius:5px"></div><div style="left:10px;top:10px;width:10px;height:10px;background:#3f9f30;border-radius:5px"></div></div><div style="left:338px;top:1056px;width:26px;height:26px;overflow:hidden;transform:scale(.92);transform-origin:11px 12px;"><div style="left:0px;top:0px;width:22px;height:22px;background:conic-gradient(from 0deg at 50% 55%,#e8d020,#f07a1a,#e0203a,#c020b0,#5030d0,#2080e0,#20c0a0,#60d030,#e8d020);border-radius:3px"></div></div><div style="left:361px;top:1056px;width:26px;height:26px;overflow:hidden;transform:scale(.92);transform-origin:11px 12px;"><div style="left:0px;top:0px;width:24px;height:23px;background:#fafafa"></div><div style="left:0px;top:0px;width:24px;height:3px;background:repeating-linear-gradient(90deg,#111 0 2px,#fff 2px 4px)"></div><div style="left:0px;top:20px;width:24px;height:3px;background:repeating-linear-gradient(90deg,#111 0 2px,#fff 2px 4px)"></div><div style="left:4px;top:7px;width:8px;height:8px;background:#777;border-radius:4px 4px 1px 1px"></div><div style="left:12px;top:6px;width:9px;height:8px;background:#222"></div><div style="left:3px;top:15px;width:8px;height:3px;background:#e2c200"></div></div><div style="left:386px;top:1056px;width:26px;height:26px;overflow:hidden;transform:scale(.92);transform-origin:11px 12px;"><svg style="left:0px;top:0px;" width="24" height="24" viewBox="0 0 24 24"><path d="M1 0L5 1L9 8L6 10Z" fill="#c8a23a"/><path d="M6 9L9 7.500L20 22L17 23Z" fill="#555"/><path d="M10 12L12 11L15 15L13 16Z" fill="#c8c8c8"/></svg></div><div style="left:410px;top:1056px;width:26px;height:26px;overflow:hidden;transform:scale(.92);transform-origin:11px 12px;"><div style="left:0px;top:2px;width:22px;height:18px;background:#f0f0f0;border:1px solid #c8c8c8"></div><div style="left:6px;top:3px;width:10px;height:11px;background:#555"></div><div style="left:9px;top:4px;width:4px;height:6px;background:#e03020"></div><div style="left:2px;top:8px;width:18px;height:2px;background:#888"></div><div style="left:3px;top:16px;width:16px;height:2px;background:repeating-linear-gradient(90deg,#aaa 0 1px,#f0f0f0 1px 3px)"></div></div><div style="left:434px;top:1056px;width:26px;height:26px;overflow:hidden;transform:scale(.92);transform-origin:11px 12px;"><div style="left:1px;top:1px;width:20px;height:21px;background:#cfc9b8;border:1px solid #8a8574;border-radius:2px"></div><div style="left:3px;top:3px;width:16px;height:5px;background:#a9b58a"></div><div style="left:3px;top:10px;width:16px;height:10px;background:repeating-linear-gradient(90deg,#555 0 3px,#cfc9b8 3px 4px)"></div><div style="left:3px;top:13px;width:16px;height:1px;background:#cfc9b8"></div><div style="left:3px;top:17px;width:16px;height:1px;background:#cfc9b8"></div><div style="left:15px;top:10px;width:4px;height:3px;background:#c83020"></div></div><div style="left:458px;top:1056px;width:26px;height:26px;overflow:hidden;transform:scale(.92);transform-origin:11px 12px;"><div style="left:0px;top:1px;width:21px;height:21px;background:linear-gradient(#5a5a5a,#3a3a3a);border-radius:3px"></div></div><div style="left:482px;top:1056px;width:26px;height:26px;overflow:hidden;transform:scale(.92);transform-origin:11px 12px;"><div style="left:2px;top:1px;width:18px;height:21px;background:#f4f4f0;border:1px solid #b9b9b0"></div><div style="left:4px;top:5px;width:14px;height:1px;background:#9ab"></div><div style="left:4px;top:9px;width:14px;height:1px;background:#9ab"></div><div style="left:4px;top:13px;width:14px;height:1px;background:#9ab"></div><div style="left:4px;top:17px;width:14px;height:1px;background:#9ab"></div><svg style="left:7px;top:0px;" width="14" height="20" viewBox="0 0 14 20"><path d="M9 0L13 2L5 18L2 19L2.500 15Z" fill="#f08a1a"/><path d="M9 0L13 2L12 4L8 2Z" fill="#e04a6a"/></svg></div><div style="left:506px;top:1056px;width:26px;height:26px;overflow:hidden;transform:scale(.92);transform-origin:11px 12px;"><div style="left:0px;top:1px;width:20px;height:20px;background:#0e0e1a;border:1px solid #777;border-radius:2px"></div></div><div style="left:530px;top:1056px;width:26px;height:26px;overflow:hidden;transform:scale(.92);transform-origin:11px 12px;"><div style="left:0px;top:1px;width:18px;height:20px;background:linear-gradient(90deg,#b98a5a,#c9a070 50%,#a97a4a);border-radius:1px"></div><div style="left:8px;top:9px;width:13px;height:13px;background:#3aa83a;border-radius:7px;border:1px solid #2a7a2a"></div><svg style="left:11px;top:12px;" width="8" height="8" viewBox="0 0 8 8"><path d="M4 0V5M1 3.500L4 7L7 3.500" stroke="#fff" stroke-width="2" fill="none"/></svg></div><div style="left:554px;top:1056px;width:26px;height:26px;overflow:hidden;transform:scale(.92);transform-origin:11px 12px;"><div style="left:0px;top:1px;width:22px;height:20px;background:#a8a8a8;border:1px solid #666"></div><div style="left:3px;top:3px;width:16px;height:12px;background:#d8d8d8;border:1px solid #666"></div><div style="left:7px;top:6px;width:8px;height:5px;background:#8aa;border:1px solid #667"></div></div><div style="left:578px;top:1056px;width:26px;height:26px;overflow:hidden;transform:scale(.92);transform-origin:11px 12px;"><div style="left:1px;top:1px;width:20px;height:20px;border-radius:10px;background:conic-gradient(#4a4a4a,#d8d8d8,#5a5a5a,#e0e0e0,#4a4a4a);border:1px solid #b9a0c0"></div></div><div style="left:602px;top:1056px;width:26px;height:26px;overflow:hidden;transform:scale(.92);transform-origin:11px 12px;"><div style="left:1px;top:2px;width:19px;height:19px;border-radius:10px;background:#f4f4f4;border:2px solid #888"></div><svg style="left:4px;top:0px;" width="20" height="14" viewBox="0 0 20 14"><path d="M2 8L7 13L17 1" stroke="#2aa83a" stroke-width="3" fill="none"/></svg><div style="left:15px;top:18px;width:6px;height:3px;background:#777;transform:rotate(45deg)"></div></div><div style="left:626px;top:1056px;width:26px;height:26px;overflow:hidden;transform:scale(.92);transform-origin:11px 12px;"><div style="left:1px;top:1px;width:20px;height:20px;border-radius:10px;background:radial-gradient(circle at 45% 40%,#8a6a9a 0 10%,#2a4a2a 30%,#111 70%);border:1.500px solid #999"></div></div><div style="left:649px;top:1056px;width:26px;height:26px;overflow:hidden;transform:scale(.92);transform-origin:11px 12px;"><div style="left:0px;top:0px;width:25px;height:24px;background:#000"></div><svg style="left:5px;top:4px;" width="16" height="18" viewBox="0 0 16 18"><path d="M3 5L7 1L10 2L12 5L14 9L13 14L12 17H10.500L11 12L8 10L6 13L5 17H3.500L4 11L2 8Z" fill="#fff"/></svg></div><div style="left:674px;top:1056px;width:26px;height:26px;overflow:hidden;transform:scale(.92);transform-origin:11px 12px;"><div style="left:0px;top:0px;width:24px;height:24px;background:linear-gradient(135deg,#0e2a4a,#1a3a5a);border-radius:3px"></div></div><span class="t" style='left:463.0px;top:1059.0px;font:normal bold 19px/20px "Liberation Sans", "DejaVu Sans", sans-serif;color:#f08a2a;'>S</span><span class="t" style='left:510.0px;top:1062.0px;font:normal bold 9px/12px "DejaVu Sans", "Liberation Sans", sans-serif;color:#f0f0f0;'>&gt;_</span><span class="t" style='left:677.0px;top:1058.0px;font:21px/22px "Liberation Sans", "DejaVu Sans", sans-serif;color:#fff;'>P</span><div style="left:690px;top:1074px;width:3px;height:3px;background:#ddd;border-radius:2px"></div><div style="left:694px;top:1074px;width:3px;height:3px;background:#ddd;border-radius:2px"></div><div style="left:701px;top:1063px;width:4px;height:1px;background:#999"></div><div style="left:701px;top:1066px;width:4px;height:1px;background:#999"></div><div style="left:701px;top:1069px;width:4px;height:1px;background:#999"></div><div style="left:701px;top:1072px;width:4px;height:1px;background:#999"></div><div style="left:709px;top:1057.5px;width:110px;height:21.5px;background:linear-gradient(#e9e9e9,#d3d3d3);border:1px solid #b4b4b4;border-radius:3px;"><div style="left:6px;top:2px;width:16px;height:16px;border-radius:8px;background:radial-gradient(circle at 60% 40%,#9ab8e0 0 40%,#e8a070 50% 100%);opacity:.8"></div></div><span class="t" style='left:740.0px;top:1059.0px;font:12.4px/18px "Liberation Sans", "DejaVu Sans", sans-serif;color:#2b2b2b;'>[Restaurati...</span><div style="left:822px;top:1057.5px;width:111px;height:21.5px;background:linear-gradient(#e9e9e9,#d3d3d3);border:1px solid #b4b4b4;border-radius:3px;"><div style="left:6px;top:3px;width:18px;height:14px;background:linear-gradient(#9ac86a,#6a9a3c);border:1px solid #5a8a2c;border-radius:1px"></div><div style="left:6px;top:1px;width:8px;height:3px;background:#8ab85a;border-radius:1px 1px 0 0"></div><svg style="left:11px;top:7px;" width="8" height="9" viewBox="0 0 8 9"><path d="M4 0V5M0.500 3.500L4 8L7.500 3.500" stroke="#eaf4e0" stroke-width="2.2" fill="none"/></svg></div><span class="t" style='left:853.0px;top:1059.0px;font:12.4px/18px "Liberation Sans", "DejaVu Sans", sans-serif;color:#2b2b2b;'>Télécharge...</span><div style="left:936px;top:1057.5px;width:111px;height:21.5px;background:linear-gradient(#e9e9e9,#d3d3d3);border:1px solid #b4b4b4;border-radius:3px;"><svg style="left:6px;top:2px;" width="17" height="17" viewBox="0 0 17 17"><path d="M1 1H10L16 7V16H1Z" fill="#fff" stroke="#18a303" stroke-width="2"/><path d="M9 1L16 8H9Z" fill="#18a303"/></svg></div><span class="t" style='left:967.0px;top:1059.0px;font:12.4px/18px "Liberation Sans", "DejaVu Sans", sans-serif;color:#2b2b2b;'>FACT_ateli...</span><div style="left:1050px;top:1057.5px;width:111px;height:21.5px;background:linear-gradient(#e9e9e9,#d3d3d3);border:1px solid #b4b4b4;border-radius:3px;"><div style="left:7px;top:3px;width:15px;height:15px;border-radius:8px;background:radial-gradient(circle,#fff 0 22%,#5a8ae0 24% 42%,#8ab0f0 44% 100%)"></div></div><span class="t" style='left:1081.0px;top:1059.0px;font:12.4px/18px "Liberation Sans", "DejaVu Sans", sans-serif;color:#2b2b2b;'>Crédit Mut...</span><div style="left:1164px;top:1057.5px;width:111px;height:21.5px;background:linear-gradient(#e9e9e9,#d3d3d3);border:1px solid #b4b4b4;border-radius:3px;"><div style="left:8px;top:2px;width:11px;height:16px;background:#f8f8f8;border:1px solid #e0e0e0"></div><div style="left:11px;top:5px;width:1px;height:9px;background:#ddd"></div><div style="left:14px;top:6px;width:1px;height:8px;background:#ddd"></div></div><span class="t" style='left:1195.0px;top:1059.0px;font:12.4px/18px "Liberation Sans", "DejaVu Sans", sans-serif;color:#2b2b2b;'>4.pdf</span><div style="left:1278px;top:1057.5px;width:111px;height:21.5px;background:linear-gradient(#bdbdbd,#b2b2b2);border:1px solid #8a8a8a;border-radius:3px;"><svg style="left:6px;top:2px;" width="17" height="17" viewBox="0 0 17 17"><path d="M1 1H10L16 7V16H1Z" fill="#fff" stroke="#18a303" stroke-width="2"/><path d="M9 1L16 8H9Z" fill="#18a303"/></svg></div><span class="t" style='left:1309.0px;top:1059.0px;font:12.4px/18px "Liberation Sans", "DejaVu Sans", sans-serif;color:#2b2b2b;'>comptes.o...</span><div style="left:1586px;top:1065px;width:4px;height:1px;background:#aaa"></div><div style="left:1586px;top:1068px;width:4px;height:1px;background:#aaa"></div><div style="left:1586px;top:1071px;width:4px;height:1px;background:#aaa"></div><div style="left:1599px;top:1071px;width:2px;height:4px;background:#4a4a4a"></div><div style="left:1602px;top:1068px;width:2px;height:7px;background:#4a4a4a"></div><div style="left:1605px;top:1065px;width:2px;height:10px;background:#4a4a4a"></div><div style="left:1608px;top:1062px;width:2px;height:13px;background:#4a4a4a"></div><div style="left:1611px;top:1061px;width:2px;height:14px;background:#b4b4b4"></div><svg style="left:1621px;top:1058px;" width="20" height="20" viewBox="0 0 20 20"><path d="M10 1Q14 3 19 3.500Q19 15 10 19.500Q1 15 1 3.500Q6 3 10 1Z" fill="#f0f0f0" stroke="#777" stroke-width="1.2"/><path d="M6 6L14 14M14 6L6 14" stroke="#e02a2a" stroke-width="3"/></svg><div style="left:1646px;top:1059px;width:20px;height:14px;background:#3a3a3a;border:1.500px solid #e8e8e8;outline:1px solid #999"></div><svg style="left:1647px;top:1060px;" width="13" height="12" viewBox="0 0 13 12"><path d="M1 1L12 11H1Z" fill="#e8c81a"/></svg><div style="left:1650px;top:1075px;width:12px;height:2px;background:#bbb"></div><div style="left:1673px;top:1058px;width:15px;height:21px;background:#7a7a7a;border-radius:8px/10px"></div><svg style="left:1676px;top:1061px;" width="9" height="15" viewBox="0 0 9 15"><path d="M1 4L8 11L4.500 14V1L8 4L1 11" stroke="#fff" stroke-width="1.400" fill="none"/></svg><span class="t" style='left:1697.0px;top:1059.0px;font:normal bold 14px/18px "Liberation Sans", "DejaVu Sans", sans-serif;color:#3a3a9a;letter-spacing:-0.34px;'>FR</span><svg style="left:1722px;top:1060px;" width="18" height="16" viewBox="0 0 18 16"><path d="M0 5.500H3L8 1V15L3 10.500H0Z" fill="#3a3a3a"/><path d="M10.500 5Q12 8 10.500 11M13 3Q15.500 8 13 13M15.500 1.500Q18.500 8 15.500 14.500" stroke="#3a3a3a" stroke-width="1.400" fill="none"/></svg><div style="left:1747px;top:1062px;width:16px;height:11px;border:2px solid #3a3a3a;border-radius:2px"></div><div style="left:1763px;top:1065px;width:2px;height:5px;background:#3a3a3a"></div><svg style="left:1750px;top:1064px;" width="10" height="7" viewBox="0 0 10 7"><path d="M0 4.500L5 0.500V3H10L5 6.500V4.500Z" fill="#3a3a3a"/></svg><div style="left:1771px;top:1058px;width:38px;height:20px;background:#000"></div><span class="t" style='left:1816.0px;top:1059.0px;font:12.4px/18px "Liberation Sans", "DejaVu Sans", sans-serif;color:#2b2b2b;letter-spacing:-0.16px;'>jeu. 14 déc., 15:18</span>
</body></html>
